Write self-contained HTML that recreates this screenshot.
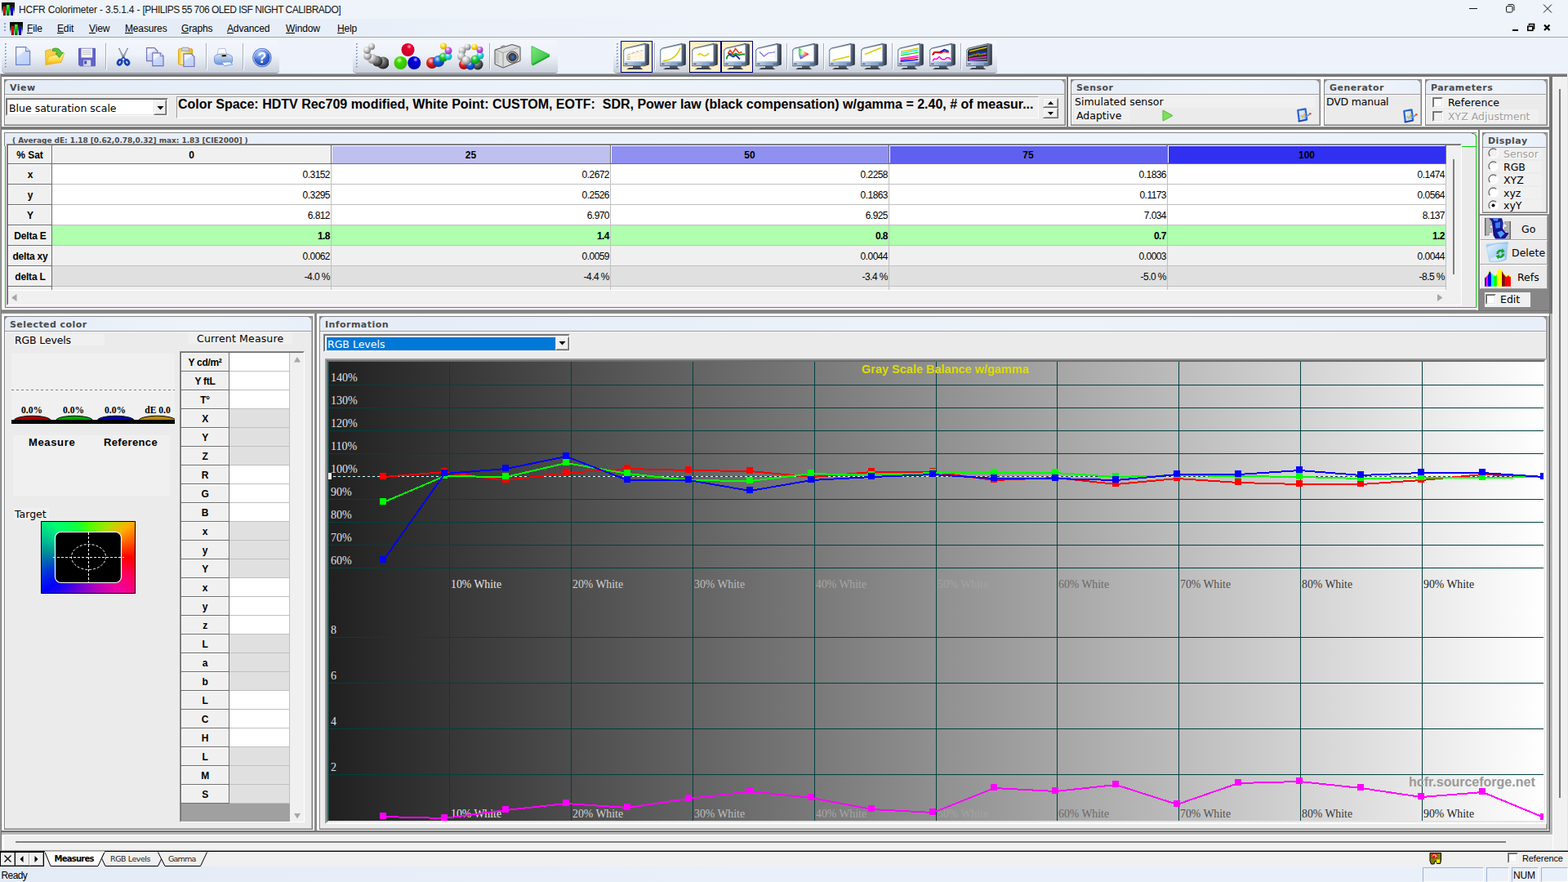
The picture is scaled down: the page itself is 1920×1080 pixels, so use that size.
<!DOCTYPE html>
<html lang="en"><head><meta charset="utf-8"><title>HCFR Colorimeter</title>
<style>
html,body{margin:0;padding:0;width:1920px;height:1080px;overflow:hidden;background:#f0f0f0}
#app{position:relative;width:1920px;height:1080px;overflow:hidden;font-family:"Liberation Sans",sans-serif}
#app div,#app span,#app svg{position:absolute;display:block;box-sizing:content-box}
#app span{white-space:nowrap}
#app span u{text-decoration:underline;text-underline-offset:1px}
#app span sup{position:static;display:inline}
</style></head><body><div id="app">
<div style="left:0px;top:0px;width:1920px;height:1080px;background:#f0f0f0"></div>
<div style="left:0px;top:0px;width:1920px;height:23px;background:#eef4fa"></div>
<div style="left:0px;top:23px;width:1920px;height:23px;background:linear-gradient(90deg,#e3ebf6 0,#e6edf7 300px,#edf2fa 650px,#eef4fa 900px)"></div>
<div style="left:0px;top:45px;width:1920px;height:1px;background:#a3a5a9"></div>
<div style="left:0px;top:46px;width:1920px;height:1px;background:#f8fafd"></div>
<div style="left:0px;top:46px;width:1920px;height:44px;background:#eef3fb"></div>
<svg width="0" height="0" style="left:0;top:0"><defs><linearGradient id="ig" x1="0" y1="0" x2="0" y2="1"><stop offset="0" stop-color="#000"/><stop offset="0.3" stop-color="#181818"/><stop offset="0.55" stop-color="#303030" stop-opacity="0.85"/><stop offset="1" stop-color="#fff" stop-opacity="0"/></linearGradient><linearGradient id="igr" x1="0" y1="0" x2="0" y2="1"><stop offset="0" stop-color="#ff0808"/><stop offset="0.4" stop-color="#f00000"/><stop offset="1" stop-color="#6c0000"/></linearGradient><linearGradient id="igg" x1="0" y1="0" x2="0" y2="1"><stop offset="0" stop-color="#50ff50"/><stop offset="0.4" stop-color="#00d800"/><stop offset="1" stop-color="#005800"/></linearGradient><linearGradient id="igb" x1="0" y1="0" x2="0" y2="1"><stop offset="0" stop-color="#0808ff"/><stop offset="0.4" stop-color="#0000f0"/><stop offset="1" stop-color="#00006c"/></linearGradient></defs></svg>
<svg style="left:2px;top:3px" width="16" height="16" viewBox="0 0 16 16"><rect x="0" y="0" width="16" height="16" fill="url(#ig)"/><rect x="2" y="5" width="3" height="11" fill="url(#igr)"/><rect x="6" y="3" width="3.600" height="13" fill="url(#igg)"/><rect x="11" y="6" width="3" height="10" fill="url(#igb)"/></svg>
<span style="left:23px;top:4px;font:12px 'Liberation Sans',sans-serif;letter-spacing:-0.18px;color:#151515;height:16px;line-height:16px;">HCFR Colorimeter - 3.5.1.4 - <em style="font-style:normal;letter-spacing:-0.52px">[PHILIPS 55 706 OLED ISF NIGHT CALIBRADO]</em></span>
<svg style="left:1790px;top:0" width="130" height="22" viewBox="0 0 130 22"><path d="M9 10.5h10" stroke="#111" stroke-width="1" fill="none"/><rect x="54.5" y="7.5" width="7.5" height="7.5" rx="1.5" stroke="#111" fill="none"/><path d="M56.5 5.5h5.5a2 2 0 0 1 2 2v5.5" stroke="#111" fill="none"/><path d="M100 5.5l10 10M110 5.5l-10 10" stroke="#111" stroke-width="1" fill="none"/></svg>
<svg style="left:1845px;top:26px" width="60" height="16" viewBox="0 0 60 16"><rect x="7" y="10" width="7" height="2" fill="#000"/><path d="M27.5 5v-1.5h6v5.5h-1.5" stroke="#000" stroke-width="1.6" fill="none"/><rect x="25.8" y="6.3" width="6" height="5" stroke="#000" stroke-width="1.6" fill="none"/><path d="M46 4.5l6.5 6.5M52.5 4.5l-6.5 6.5" stroke="#000" stroke-width="2.2" fill="none"/></svg>
<div style="left:6px;top:29px;width:1px;height:1px;background:#fff"></div>
<div style="left:5px;top:28px;width:2px;height:2px;background:#8ea4cc"></div>
<div style="left:6px;top:33px;width:1px;height:1px;background:#fff"></div>
<div style="left:5px;top:32px;width:2px;height:2px;background:#8ea4cc"></div>
<div style="left:6px;top:37px;width:1px;height:1px;background:#fff"></div>
<div style="left:5px;top:36px;width:2px;height:2px;background:#8ea4cc"></div>
<svg style="left:12px;top:27px" width="16" height="16" viewBox="0 0 16 16"><rect x="0" y="0" width="16" height="16" fill="url(#ig)"/><rect x="2" y="5" width="3" height="11" fill="url(#igr)"/><rect x="6" y="3" width="3.600" height="13" fill="url(#igg)"/><rect x="11" y="6" width="3" height="10" fill="url(#igb)"/></svg>
<span style="left:33px;top:27px;font:12px 'Liberation Sans',sans-serif;letter-spacing:-0.15px;color:#000;height:16px;line-height:16px;">File</span>
<div style="left:33px;top:40px;width:7px;height:1px;background:#000"></div>
<span style="left:70px;top:27px;font:12px 'Liberation Sans',sans-serif;letter-spacing:-0.15px;color:#000;height:16px;line-height:16px;">Edit</span>
<div style="left:70px;top:40px;width:8px;height:1px;background:#000"></div>
<span style="left:109px;top:27px;font:12px 'Liberation Sans',sans-serif;letter-spacing:-0.15px;color:#000;height:16px;line-height:16px;">View</span>
<div style="left:109px;top:40px;width:8px;height:1px;background:#000"></div>
<span style="left:153px;top:27px;font:12px 'Liberation Sans',sans-serif;letter-spacing:-0.15px;color:#000;height:16px;line-height:16px;">Measures</span>
<div style="left:153px;top:40px;width:10px;height:1px;background:#000"></div>
<span style="left:222px;top:27px;font:12px 'Liberation Sans',sans-serif;letter-spacing:-0.15px;color:#000;height:16px;line-height:16px;">Graphs</span>
<div style="left:222px;top:40px;width:9px;height:1px;background:#000"></div>
<span style="left:278px;top:27px;font:12px 'Liberation Sans',sans-serif;letter-spacing:-0.15px;color:#000;height:16px;line-height:16px;">Advanced</span>
<div style="left:278px;top:40px;width:8px;height:1px;background:#000"></div>
<span style="left:350px;top:27px;font:12px 'Liberation Sans',sans-serif;letter-spacing:-0.15px;color:#000;height:16px;line-height:16px;">Window</span>
<div style="left:350px;top:40px;width:11px;height:1px;background:#000"></div>
<span style="left:413px;top:27px;font:12px 'Liberation Sans',sans-serif;letter-spacing:-0.15px;color:#000;height:16px;line-height:16px;">Help</span>
<div style="left:413px;top:40px;width:9px;height:1px;background:#000"></div>
<div style="left:2px;top:49px;width:340px;height:40px;background:linear-gradient(#f3f6fc 0%,#eef2f9 45%,#dde2ec 72%,#c9cfdb 100%);border-radius:4px 4px 4px 5px;box-shadow:0 1px 0 #8d929c"></div>
<div style="left:7px;top:54px;width:1px;height:1px;background:#fff"></div>
<div style="left:6px;top:53px;width:2px;height:2px;background:#86a0cc"></div>
<div style="left:7px;top:54px;width:1px;height:1px;background:#dfe7f5"></div>
<div style="left:7px;top:58px;width:1px;height:1px;background:#fff"></div>
<div style="left:6px;top:57px;width:2px;height:2px;background:#86a0cc"></div>
<div style="left:7px;top:58px;width:1px;height:1px;background:#dfe7f5"></div>
<div style="left:7px;top:62px;width:1px;height:1px;background:#fff"></div>
<div style="left:6px;top:61px;width:2px;height:2px;background:#86a0cc"></div>
<div style="left:7px;top:62px;width:1px;height:1px;background:#dfe7f5"></div>
<div style="left:7px;top:66px;width:1px;height:1px;background:#fff"></div>
<div style="left:6px;top:65px;width:2px;height:2px;background:#86a0cc"></div>
<div style="left:7px;top:66px;width:1px;height:1px;background:#dfe7f5"></div>
<div style="left:7px;top:70px;width:1px;height:1px;background:#fff"></div>
<div style="left:6px;top:69px;width:2px;height:2px;background:#86a0cc"></div>
<div style="left:7px;top:70px;width:1px;height:1px;background:#dfe7f5"></div>
<div style="left:7px;top:74px;width:1px;height:1px;background:#fff"></div>
<div style="left:6px;top:73px;width:2px;height:2px;background:#86a0cc"></div>
<div style="left:7px;top:74px;width:1px;height:1px;background:#dfe7f5"></div>
<div style="left:7px;top:78px;width:1px;height:1px;background:#fff"></div>
<div style="left:6px;top:77px;width:2px;height:2px;background:#86a0cc"></div>
<div style="left:7px;top:78px;width:1px;height:1px;background:#dfe7f5"></div>
<div style="left:7px;top:82px;width:1px;height:1px;background:#fff"></div>
<div style="left:6px;top:81px;width:2px;height:2px;background:#86a0cc"></div>
<div style="left:7px;top:82px;width:1px;height:1px;background:#dfe7f5"></div>
<div style="left:432px;top:49px;width:251px;height:40px;background:linear-gradient(#f3f6fc 0%,#eef2f9 45%,#dde2ec 72%,#c9cfdb 100%);border-radius:4px 4px 4px 5px;box-shadow:0 1px 0 #8d929c"></div>
<div style="left:437px;top:54px;width:1px;height:1px;background:#fff"></div>
<div style="left:436px;top:53px;width:2px;height:2px;background:#86a0cc"></div>
<div style="left:437px;top:54px;width:1px;height:1px;background:#dfe7f5"></div>
<div style="left:437px;top:58px;width:1px;height:1px;background:#fff"></div>
<div style="left:436px;top:57px;width:2px;height:2px;background:#86a0cc"></div>
<div style="left:437px;top:58px;width:1px;height:1px;background:#dfe7f5"></div>
<div style="left:437px;top:62px;width:1px;height:1px;background:#fff"></div>
<div style="left:436px;top:61px;width:2px;height:2px;background:#86a0cc"></div>
<div style="left:437px;top:62px;width:1px;height:1px;background:#dfe7f5"></div>
<div style="left:437px;top:66px;width:1px;height:1px;background:#fff"></div>
<div style="left:436px;top:65px;width:2px;height:2px;background:#86a0cc"></div>
<div style="left:437px;top:66px;width:1px;height:1px;background:#dfe7f5"></div>
<div style="left:437px;top:70px;width:1px;height:1px;background:#fff"></div>
<div style="left:436px;top:69px;width:2px;height:2px;background:#86a0cc"></div>
<div style="left:437px;top:70px;width:1px;height:1px;background:#dfe7f5"></div>
<div style="left:437px;top:74px;width:1px;height:1px;background:#fff"></div>
<div style="left:436px;top:73px;width:2px;height:2px;background:#86a0cc"></div>
<div style="left:437px;top:74px;width:1px;height:1px;background:#dfe7f5"></div>
<div style="left:437px;top:78px;width:1px;height:1px;background:#fff"></div>
<div style="left:436px;top:77px;width:2px;height:2px;background:#86a0cc"></div>
<div style="left:437px;top:78px;width:1px;height:1px;background:#dfe7f5"></div>
<div style="left:437px;top:82px;width:1px;height:1px;background:#fff"></div>
<div style="left:436px;top:81px;width:2px;height:2px;background:#86a0cc"></div>
<div style="left:437px;top:82px;width:1px;height:1px;background:#dfe7f5"></div>
<div style="left:751px;top:49px;width:470px;height:40px;background:linear-gradient(#f3f6fc 0%,#eef2f9 45%,#dde2ec 72%,#c9cfdb 100%);border-radius:4px 4px 4px 5px;box-shadow:0 1px 0 #8d929c"></div>
<div style="left:756px;top:54px;width:1px;height:1px;background:#fff"></div>
<div style="left:755px;top:53px;width:2px;height:2px;background:#86a0cc"></div>
<div style="left:756px;top:54px;width:1px;height:1px;background:#dfe7f5"></div>
<div style="left:756px;top:58px;width:1px;height:1px;background:#fff"></div>
<div style="left:755px;top:57px;width:2px;height:2px;background:#86a0cc"></div>
<div style="left:756px;top:58px;width:1px;height:1px;background:#dfe7f5"></div>
<div style="left:756px;top:62px;width:1px;height:1px;background:#fff"></div>
<div style="left:755px;top:61px;width:2px;height:2px;background:#86a0cc"></div>
<div style="left:756px;top:62px;width:1px;height:1px;background:#dfe7f5"></div>
<div style="left:756px;top:66px;width:1px;height:1px;background:#fff"></div>
<div style="left:755px;top:65px;width:2px;height:2px;background:#86a0cc"></div>
<div style="left:756px;top:66px;width:1px;height:1px;background:#dfe7f5"></div>
<div style="left:756px;top:70px;width:1px;height:1px;background:#fff"></div>
<div style="left:755px;top:69px;width:2px;height:2px;background:#86a0cc"></div>
<div style="left:756px;top:70px;width:1px;height:1px;background:#dfe7f5"></div>
<div style="left:756px;top:74px;width:1px;height:1px;background:#fff"></div>
<div style="left:755px;top:73px;width:2px;height:2px;background:#86a0cc"></div>
<div style="left:756px;top:74px;width:1px;height:1px;background:#dfe7f5"></div>
<div style="left:756px;top:78px;width:1px;height:1px;background:#fff"></div>
<div style="left:755px;top:77px;width:2px;height:2px;background:#86a0cc"></div>
<div style="left:756px;top:78px;width:1px;height:1px;background:#dfe7f5"></div>
<div style="left:756px;top:82px;width:1px;height:1px;background:#fff"></div>
<div style="left:755px;top:81px;width:2px;height:2px;background:#86a0cc"></div>
<div style="left:756px;top:82px;width:1px;height:1px;background:#dfe7f5"></div>
<div style="left:129px;top:53px;width:1px;height:32px;background:#a8afbd"></div>
<div style="left:130px;top:54px;width:1px;height:32px;background:#fff"></div>
<div style="left:252px;top:53px;width:1px;height:32px;background:#a8afbd"></div>
<div style="left:253px;top:54px;width:1px;height:32px;background:#fff"></div>
<div style="left:297px;top:53px;width:1px;height:32px;background:#a8afbd"></div>
<div style="left:298px;top:54px;width:1px;height:32px;background:#fff"></div>
<div style="left:599px;top:53px;width:1px;height:32px;background:#a8afbd"></div>
<div style="left:600px;top:54px;width:1px;height:32px;background:#fff"></div>
<div style="left:801px;top:53px;width:1px;height:32px;background:#a8afbd"></div>
<div style="left:802px;top:54px;width:1px;height:32px;background:#fff"></div>
<div style="left:963px;top:53px;width:1px;height:32px;background:#a8afbd"></div>
<div style="left:964px;top:54px;width:1px;height:32px;background:#fff"></div>
<div style="left:1008px;top:53px;width:1px;height:32px;background:#a8afbd"></div>
<div style="left:1009px;top:54px;width:1px;height:32px;background:#fff"></div>
<div style="left:1092px;top:53px;width:1px;height:32px;background:#a8afbd"></div>
<div style="left:1093px;top:54px;width:1px;height:32px;background:#fff"></div>
<div style="left:1176px;top:53px;width:1px;height:32px;background:#a8afbd"></div>
<div style="left:1177px;top:54px;width:1px;height:32px;background:#fff"></div>
<svg width="0" height="0" style="left:0;top:0"><defs>
<linearGradient id="pg" x1="0" y1="0" x2="1" y2="1"><stop offset="0" stop-color="#f4f6ff"/><stop offset="1" stop-color="#c3cdf4"/></linearGradient>
<linearGradient id="fg" x1="0" y1="0" x2="0" y2="1"><stop offset="0" stop-color="#fdf3a8"/><stop offset="1" stop-color="#f0b818"/></linearGradient>
<linearGradient id="mg" x1="0" y1="0.7" x2="1" y2="1"><stop offset="0" stop-color="#d0dcee"/><stop offset="0.5" stop-color="#9cb4d4"/><stop offset="1" stop-color="#6c8cb8"/></linearGradient><linearGradient id="ms" x1="0" y1="0" x2="1" y2="0.300"><stop offset="0" stop-color="#7c8ca4"/><stop offset="0.5" stop-color="#4a5668"/><stop offset="1" stop-color="#2a323e"/></linearGradient>
<linearGradient id="mb" x1="0" y1="0" x2="0" y2="1"><stop offset="0" stop-color="#e8eef6"/><stop offset="1" stop-color="#9db0c8"/></linearGradient>
<radialGradient id="bgray" cx="0.35" cy="0.3" r="0.7"><stop offset="0" stop-color="#fff"/><stop offset="0.5" stop-color="#c8c8c8"/><stop offset="1" stop-color="#777"/></radialGradient>
<radialGradient id="bdark" cx="0.35" cy="0.3" r="0.7"><stop offset="0" stop-color="#ccc"/><stop offset="0.5" stop-color="#666"/><stop offset="1" stop-color="#222"/></radialGradient>
<radialGradient id="bred" cx="0.6" cy="0.25" r="0.75"><stop offset="0" stop-color="#ffb0c0"/><stop offset="0.25" stop-color="#e80030"/><stop offset="1" stop-color="#c00028"/></radialGradient>
<radialGradient id="bgreen" cx="0.4" cy="0.3" r="0.75"><stop offset="0" stop-color="#d0ffb0"/><stop offset="0.3" stop-color="#40d800"/><stop offset="1" stop-color="#30b800"/></radialGradient>
<radialGradient id="bblue" cx="0.6" cy="0.25" r="0.75"><stop offset="0" stop-color="#b0b0ff"/><stop offset="0.25" stop-color="#0000e0"/><stop offset="1" stop-color="#0000b0"/></radialGradient>
<radialGradient id="byel" cx="0.4" cy="0.3" r="0.75"><stop offset="0" stop-color="#fffff0"/><stop offset="0.4" stop-color="#ffe020"/><stop offset="1" stop-color="#c8a000"/></radialGradient>
<radialGradient id="bmag" cx="0.4" cy="0.3" r="0.75"><stop offset="0" stop-color="#fff0ff"/><stop offset="0.4" stop-color="#d060e0"/><stop offset="1" stop-color="#9020b0"/></radialGradient>
<radialGradient id="bcy" cx="0.4" cy="0.3" r="0.75"><stop offset="0" stop-color="#f0ffff"/><stop offset="0.4" stop-color="#30d8e0"/><stop offset="1" stop-color="#0098a8"/></radialGradient>
<radialGradient id="bgr2" cx="0.4" cy="0.3" r="0.75"><stop offset="0" stop-color="#e0ffe0"/><stop offset="0.4" stop-color="#20c830"/><stop offset="1" stop-color="#008818"/></radialGradient>
<radialGradient id="brd2" cx="0.4" cy="0.3" r="0.75"><stop offset="0" stop-color="#ffd0d0"/><stop offset="0.4" stop-color="#e02020"/><stop offset="1" stop-color="#900000"/></radialGradient>
<radialGradient id="bbl2" cx="0.4" cy="0.3" r="0.75"><stop offset="0" stop-color="#d0e8ff"/><stop offset="0.4" stop-color="#1060e0"/><stop offset="1" stop-color="#003090"/></radialGradient>
<radialGradient id="hq" cx="0.4" cy="0.3" r="0.8"><stop offset="0" stop-color="#a8c4f8"/><stop offset="0.5" stop-color="#3868d0"/><stop offset="1" stop-color="#1838a0"/></radialGradient>
<linearGradient id="play" x1="0" y1="0" x2="1" y2="1"><stop offset="0" stop-color="#80e880"/><stop offset="1" stop-color="#28b838"/></linearGradient>

</defs></svg>
<svg style="left:0;top:46px" width="345" height="44" viewBox="0 46 345 44"><defs><linearGradient id="pg2" x1="0" y1="0" x2="0.6" y2="1"><stop offset="0" stop-color="#fbfcff"/><stop offset="0.42" stop-color="#eef2ff"/><stop offset="0.46" stop-color="#cfdcfb"/><stop offset="1" stop-color="#bcd0fa"/></linearGradient><linearGradient id="fg2" x1="0" y1="0" x2="0" y2="1"><stop offset="0" stop-color="#fff6b0"/><stop offset="0.6" stop-color="#fbd848"/><stop offset="1" stop-color="#f0b000"/></linearGradient><linearGradient id="cb2" x1="0" y1="0" x2="1" y2="0"><stop offset="0" stop-color="#f0c020"/><stop offset="0.3" stop-color="#fff4b0"/><stop offset="1" stop-color="#e8b010"/></linearGradient><linearGradient id="pr2" x1="0" y1="0" x2="0" y2="1"><stop offset="0" stop-color="#dce8fc"/><stop offset="1" stop-color="#6c98dc"/></linearGradient></defs><path d="M19.6 57.6h12l5 5v16.8h-17z" fill="url(#pg2)" stroke="#6c84c4" stroke-width="1.2"/><path d="M31.6 57.6v5h5" fill="#e4ecff" stroke="#6c84c4" stroke-width="1.1"/><path d="M55.500 62.200l6.700-2 2.800 2h7.500v6l-16.500 11z" fill="#f6d048" stroke="#dca418" stroke-width="0.700"/><path d="M56 79.400l3.400-10 5-1.400 4.300-1.100 10-1.900-3.700 11.200z" fill="url(#fg2)" stroke="#e4ac1c" stroke-width="0.800"/><path d="M64.500 59.800c4.500-1.800 9-0.300 10.800 4.600l2-0.300-4.600 6.500-4.700-5 2.400-0.500c-1.300-2.600-3.300-3.300-5.900-2.600z" fill="#5cc43c" stroke="#2f8f22" stroke-width="0.800"/><path d="M96.500 59.300h20v21.500h-18.500l-1.500-1.500z" fill="#6264c8" stroke="#4a4cb0" stroke-width="0.800"/><rect x="99.500" y="59.500" width="13.700" height="11" fill="#f6f6f8"/><path d="M101 62.200h10.500M101 64.400h10.500M101 66.600h10.500" stroke="#b4b4c0" stroke-width="0.800"/><rect x="102.200" y="73.500" width="9" height="7.300" fill="#dcdce4"/><rect x="103.200" y="74.500" width="3" height="4" fill="#4a50b8"/><path d="M145 59l1.200 0 5.800 11-1.600 1.600z" fill="#56667e"/><path d="M157 59l-1.200 0-5.800 11 1.600 1.600z" fill="#56667e"/><path d="M146 60.500l4.500 9M156 60.500l-4.500 9" stroke="#eef2f8" stroke-width="0.600"/><ellipse cx="146.700" cy="76.300" rx="2.300" ry="3.100" fill="none" stroke="#1440b0" stroke-width="2.700" transform="rotate(28 146.700 76.300)"/><ellipse cx="155.400" cy="76.300" rx="2.300" ry="3.100" fill="none" stroke="#1440b0" stroke-width="2.700" transform="rotate(-28 155.400 76.300)"/><path d="M148.500 72.500l2.600-2.500 2.600 2.500" stroke="#1440b0" stroke-width="1.600" fill="none"/><path d="M179.600 58.600h9.500l3.700 3.700v12.300h-13.200z" fill="url(#pg2)" stroke="#7472b4" stroke-width="1.200"/><path d="M186.800 64.900h9.500l3.700 3.700v12h-13.200z" fill="url(#pg2)" stroke="#7472b4" stroke-width="1.200"/><path d="M196.300 64.900v3.700h3.700" fill="#e4ecff" stroke="#7472b4" stroke-width="1"/><rect x="218.500" y="59.400" width="17.300" height="20" rx="2.200" fill="url(#cb2)" stroke="#d8a018" stroke-width="0.900"/><path d="M222 62.300l1.200-4h7.600l1.200 4z" fill="#d4d8e0" stroke="#8890a0" stroke-width="0.800"/><path d="M224.900 65.800h9.300l3.700 3.700v12h-13z" fill="url(#pg2)" stroke="#7472b4" stroke-width="1.200"/><path d="M266.300 67l1-7.300 8.500-0.400 1.700 7.300z" fill="#fcfcff" stroke="#a0b4dc" stroke-width="0.800"/><path d="M262.500 70.500c0-3 4-4.500 10.500-4.500s11.500 1.500 11.500 4.500v4.500c0 2.500-4 4-7 4h-9.500c-3 0-5.500-1.500-5.500-4z" fill="url(#pr2)" stroke="#6488cc" stroke-width="0.800"/><path d="M270.300 66l7.300-0.300 1 5.500-7.700 0.600z" fill="#d4d6da" stroke="#a8acb4" stroke-width="0.500"/><path d="M271.500 67.200l5.200-0.200 0.400 2.200-5.300 0.300z" fill="#1c1c20"/><path d="M271.300 76.300l10-0.600 3.500 3.100-10 1.900z" fill="#f0f6ff" stroke="#4c90e8" stroke-width="0.800"/><circle cx="320.900" cy="70.600" r="11.300" fill="url(#hq)" stroke="#4a6cb8" stroke-width="0.800"/><circle cx="320.900" cy="70.600" r="10.300" fill="none" stroke="#dce6fa" stroke-width="0.900"/><path d="M312 67a9.500 9.500 0 0 1 17.500-1c-6 0-12 2-17.500 6z" fill="#fff" opacity="0.180"/><text x="320.900" y="76.800" text-anchor="middle" font-family="Liberation Sans,sans-serif" font-weight="bold" font-size="17.500" fill="#fff">?</text></svg>
<svg style="left:444px;top:53px" width="32" height="33" viewBox="0 0 32 33"><circle cx="25" cy="24" r="7.500" fill="url(#bdark)"/><circle cx="18" cy="22" r="6.500" fill="url(#bdark)"/><circle cx="12" cy="19" r="6" fill="url(#bgray)"/><circle cx="6" cy="15.500" r="5" fill="url(#bgray)"/><circle cx="5.500" cy="8.500" r="4.500" fill="url(#bgray)"/><circle cx="11" cy="4" r="4" fill="url(#bgray)"/></svg>
<svg style="left:482px;top:52px" width="34" height="34" viewBox="0 0 34 34"><circle cx="17.500" cy="9" r="8" fill="url(#bred)"/><circle cx="8.500" cy="25" r="8" fill="url(#bgreen)"/><circle cx="25.200" cy="25" r="8" fill="url(#bblue)"/></svg>
<svg style="left:521px;top:52px" width="34" height="34" viewBox="0 0 34 34"><circle cx="8" cy="25" r="7" fill="url(#brd2)"/><circle cx="16" cy="23" r="7" fill="url(#bbl2)"/><circle cx="22" cy="18" r="5.500" fill="url(#bgr2)"/><circle cx="28" cy="17" r="4.500" fill="url(#bcy)"/><circle cx="28" cy="10" r="4.500" fill="url(#bmag)"/><circle cx="22" cy="4.500" r="4" fill="url(#byel)"/></svg>
<svg style="left:560px;top:54px" width="34" height="34" viewBox="0 0 34 34"><circle cx="25" cy="25" r="6.500" fill="url(#bdark)"/><circle cx="8" cy="25" r="6" fill="url(#brd2)"/><circle cx="16" cy="26" r="5.500" fill="url(#bbl2)"/><circle cx="22" cy="19" r="5.500" fill="url(#bgr2)"/><circle cx="28" cy="14" r="4.500" fill="url(#bcy)"/><circle cx="27.500" cy="7" r="4" fill="url(#bmag)"/><circle cx="21" cy="3.500" r="3.800" fill="url(#byel)"/><circle cx="12.500" cy="3.500" r="4" fill="url(#bgray)"/><circle cx="6" cy="8" r="4.500" fill="url(#bgray)"/><circle cx="5" cy="15" r="5" fill="url(#bgray)"/><circle cx="11" cy="20" r="5.500" fill="url(#bgray)"/></svg>
<svg style="left:605px;top:53px" width="34" height="32" viewBox="0 0 34 32"><path d="M1 8l21-6.500 10 3v17l-21 8.500-10-4.500z" fill="#dcdcdc" stroke="#4c4c4c" stroke-width="1"/><path d="M1 8l10 3.500v18.500" fill="none" stroke="#888" stroke-width="0.800"/><path d="M11 11.500l21-7" stroke="#999" stroke-width="0.800" fill="none"/><path d="M3 11v13M5 12v13" stroke="#aaa" stroke-width="0.800"/><circle cx="22.500" cy="17" r="7" fill="#a0a0a0" stroke="#505050"/><circle cx="22.500" cy="17" r="4.500" fill="#404858" stroke="#222"/><circle cx="22.500" cy="17" r="2" fill="#2868d0"/><rect x="8" y="3.500" width="5" height="2" fill="#999" transform="rotate(-17 8 3.500)"/></svg>
<svg style="left:649px;top:55px" width="26" height="27" viewBox="0 0 26 27"><path d="M2 1.500l22 10.500-20.500 12.500-1.500-1z" fill="url(#play)" stroke="#30b840" stroke-width="0.800"/><path d="M2 23.500l22-11.500v2.500l-20.500 11z" fill="#28a838"/></svg>
<div style="left:760px;top:50px;width:39px;height:39px;background:#ffefc8;border:1px solid #000080;box-sizing:border-box"></div>
<div style="left:844px;top:50px;width:39px;height:39px;background:#ffefc8;border:1px solid #000080;box-sizing:border-box"></div>
<div style="left:883px;top:50px;width:39px;height:39px;background:#ffefc8;border:1px solid #000080;box-sizing:border-box"></div>
<svg style="left:763px;top:53px" width="32" height="33" viewBox="0 0 32 33"><g> <path d="M4 32l3.200-2h14.300l3 2z" fill="#3c424a"/><rect x="12" y="28" width="9.500" height="2.200" fill="#4c535c"/> <path d="M27 0.300l3.800 0.500q1 0.200 1 1.200v23.500q0 1-1 1.300l-3.800 1z" fill="url(#ms)"/> <path d="M2.600 6.200L27 0.400v27.300H1q-0.900 0-0.900-0.900V10.500q0-1.200 0.700-2.300z" fill="url(#mg)" stroke="#465260" stroke-width="0.900"/> <path d="M3.100 7.400L26.500 1.900v20.200H1.900V10.300z" fill="#fff"/> <path d="M1 22.100h25.800" stroke="#e8eef6" stroke-width="0.500"/> <rect x="1.800" y="24.700" width="3.800" height="1.300" fill="#4c5a70"/><rect x="22" y="24.800" width="4.400" height="1.300" fill="#4c5a70"/><rect x="13" y="25" width="1.400" height="1.200" fill="#8ca0bc"/></g><g fill="#fde3b0"><path d="M3.500 12.500l21-5v13.500h-21z" opacity="0.550"/></g><g stroke="#fff" stroke-width="1.600" fill="none"><path d="M10 15.500l4.500-1M16 14l4-0.800M21.500 11.500l3-0.500M10 18.500h4.500M16 17.500h4M21.500 16.500h3M10 21h4.500M16 20.500h4M21.500 20h3"/></g><g stroke="#b4b8cc" stroke-width="1.200" fill="none"><path d="M5.500 14.500l3-1.500M10.500 12.500l3.500-1.200M16 10.500l3-0.800M21.500 9.200l2-0.600M5 17.500l3.500-1.300M5 19.700l3.500-0.500"/></g></svg>
<svg style="left:808px;top:53px" width="32" height="33" viewBox="0 0 32 33"><g> <path d="M4 32l3.200-2h14.300l3 2z" fill="#3c424a"/><rect x="12" y="28" width="9.500" height="2.200" fill="#4c535c"/> <path d="M27 0.300l3.800 0.500q1 0.200 1 1.200v23.500q0 1-1 1.300l-3.800 1z" fill="url(#ms)"/> <path d="M2.600 6.200L27 0.400v27.300H1q-0.900 0-0.900-0.900V10.500q0-1.200 0.700-2.300z" fill="url(#mg)" stroke="#465260" stroke-width="0.900"/> <path d="M3.100 7.400L26.500 1.900v20.200H1.900V10.300z" fill="#fff"/> <path d="M1 22.100h25.800" stroke="#e8eef6" stroke-width="0.500"/> <rect x="1.800" y="24.700" width="3.800" height="1.300" fill="#4c5a70"/><rect x="22" y="24.800" width="4.400" height="1.300" fill="#4c5a70"/><rect x="13" y="25" width="1.400" height="1.200" fill="#8ca0bc"/></g><path d="M4 21.500c9-0.500 17-5 21-16" stroke="#d4cc00" stroke-width="1.500" fill="none"/></svg>
<svg style="left:847px;top:53px" width="32" height="33" viewBox="0 0 32 33"><g> <path d="M4 32l3.200-2h14.300l3 2z" fill="#3c424a"/><rect x="12" y="28" width="9.500" height="2.200" fill="#4c535c"/> <path d="M27 0.300l3.800 0.500q1 0.200 1 1.200v23.500q0 1-1 1.300l-3.800 1z" fill="url(#ms)"/> <path d="M2.600 6.200L27 0.400v27.300H1q-0.900 0-0.900-0.900V10.500q0-1.200 0.700-2.300z" fill="url(#mg)" stroke="#465260" stroke-width="0.900"/> <path d="M3.100 7.400L26.500 1.900v20.200H1.900V10.300z" fill="#fff"/> <path d="M1 22.100h25.800" stroke="#e8eef6" stroke-width="0.500"/> <rect x="1.800" y="24.700" width="3.800" height="1.300" fill="#4c5a70"/><rect x="22" y="24.800" width="4.400" height="1.300" fill="#4c5a70"/><rect x="13" y="25" width="1.400" height="1.200" fill="#8ca0bc"/></g><path d="M7.500 14.500l2.200-1.700 2 0.300 2.600 2 2.400 0.300 2.200-1.200 2.600-2" stroke="#d4cc00" stroke-width="1.500" fill="none"/></svg>
<svg style="left:886px;top:53px" width="32" height="33" viewBox="0 0 32 33"><g> <path d="M4 32l3.200-2h14.300l3 2z" fill="#3c424a"/><rect x="12" y="28" width="9.500" height="2.200" fill="#4c535c"/> <path d="M27 0.300l3.800 0.500q1 0.200 1 1.200v23.500q0 1-1 1.300l-3.800 1z" fill="url(#ms)"/> <path d="M2.600 6.200L27 0.400v27.300H1q-0.900 0-0.900-0.900V10.500q0-1.200 0.700-2.300z" fill="url(#mg)" stroke="#465260" stroke-width="0.900"/> <path d="M3.100 7.400L26.500 1.900v20.200H1.900V10.300z" fill="#fff"/> <path d="M1 22.100h25.800" stroke="#e8eef6" stroke-width="0.500"/> <rect x="1.800" y="24.700" width="3.800" height="1.300" fill="#4c5a70"/><rect x="22" y="24.800" width="4.400" height="1.300" fill="#4c5a70"/><rect x="13" y="25" width="1.400" height="1.200" fill="#8ca0bc"/></g><path d="M3.500 19.500l1.300-4 4-2.500 3.200 1 3-1.500 4 2 4-1h3" stroke="#109020" stroke-width="1.800" fill="none"/><path d="M5.500 11.500l3.500 3.500 3 1.500 3-2 5 5" stroke="#1030a0" stroke-width="1.800" fill="none"/><path d="M5.500 12.500l2.500-4 3 4 3.500-6 4.500 5.500 3.500-1.500" stroke="#e05020" stroke-width="1.800" fill="none"/></svg>
<svg style="left:925px;top:53px" width="32" height="33" viewBox="0 0 32 33"><g> <path d="M4 32l3.200-2h14.300l3 2z" fill="#3c424a"/><rect x="12" y="28" width="9.500" height="2.200" fill="#4c535c"/> <path d="M27 0.300l3.800 0.500q1 0.200 1 1.200v23.500q0 1-1 1.300l-3.800 1z" fill="url(#ms)"/> <path d="M2.600 6.200L27 0.400v27.300H1q-0.900 0-0.900-0.900V10.500q0-1.200 0.700-2.300z" fill="url(#mg)" stroke="#465260" stroke-width="0.900"/> <path d="M3.100 7.400L26.500 1.900v20.200H1.900V10.300z" fill="#fff"/> <path d="M1 22.100h25.800" stroke="#e8eef6" stroke-width="0.500"/> <rect x="1.800" y="24.700" width="3.800" height="1.300" fill="#4c5a70"/><rect x="22" y="24.800" width="4.400" height="1.300" fill="#4c5a70"/><rect x="13" y="25" width="1.400" height="1.200" fill="#8ca0bc"/></g><path d="M4 19h21M4 16.500h21M4 14h21" stroke="#ececec" stroke-width="0.500"/><path d="M24.500 6v14" stroke="#c8e8b8" stroke-width="0.600"/><path d="M5 10.500l5.500 5.500 5-4 5.500-0.800 3-0.700" stroke="#7468e0" stroke-width="1.100" fill="none"/></svg>
<svg style="left:970px;top:53px" width="32" height="33" viewBox="0 0 32 33"><g> <path d="M4 32l3.200-2h14.300l3 2z" fill="#3c424a"/><rect x="12" y="28" width="9.500" height="2.200" fill="#4c535c"/> <path d="M27 0.300l3.800 0.500q1 0.200 1 1.200v23.500q0 1-1 1.300l-3.800 1z" fill="url(#ms)"/> <path d="M2.600 6.200L27 0.400v27.300H1q-0.900 0-0.900-0.900V10.500q0-1.200 0.700-2.300z" fill="url(#mg)" stroke="#465260" stroke-width="0.900"/> <path d="M3.100 7.400L26.500 1.900v20.200H1.900V10.300z" fill="#fff"/> <path d="M1 22.100h25.800" stroke="#e8eef6" stroke-width="0.500"/> <rect x="1.800" y="24.700" width="3.800" height="1.300" fill="#4c5a70"/><rect x="22" y="24.800" width="4.400" height="1.300" fill="#4c5a70"/><rect x="13" y="25" width="1.400" height="1.200" fill="#8ca0bc"/></g><defs><linearGradient id="cie" x1="0" y1="0" x2="1" y2="0.400"><stop offset="0" stop-color="#00d030"/><stop offset="0.500" stop-color="#f0ffd0"/><stop offset="1" stop-color="#ff1010"/></linearGradient><linearGradient id="cie2" x1="0.300" y1="0" x2="0" y2="1"><stop offset="0.450" stop-color="#1020ff" stop-opacity="0"/><stop offset="1" stop-color="#1020ff"/></linearGradient></defs><path d="M8.500 5.500c-1.500 4-0.500 11 2 14l10-6c-4-3-8-6-12-8z" fill="url(#cie)"/><path d="M8.500 5.500c-1.500 4-0.500 11 2 14l10-6c-4-3-8-6-12-8z" fill="url(#cie2)"/></svg>
<svg style="left:1015px;top:53px" width="32" height="33" viewBox="0 0 32 33"><g> <path d="M4 32l3.200-2h14.300l3 2z" fill="#3c424a"/><rect x="12" y="28" width="9.500" height="2.200" fill="#4c535c"/> <path d="M27 0.300l3.800 0.500q1 0.200 1 1.200v23.500q0 1-1 1.300l-3.800 1z" fill="url(#ms)"/> <path d="M2.600 6.200L27 0.400v27.300H1q-0.900 0-0.900-0.900V10.500q0-1.200 0.700-2.300z" fill="url(#mg)" stroke="#465260" stroke-width="0.900"/> <path d="M3.100 7.400L26.500 1.900v20.200H1.900V10.300z" fill="#fff"/> <path d="M1 22.100h25.800" stroke="#e8eef6" stroke-width="0.500"/> <rect x="1.800" y="24.700" width="3.800" height="1.300" fill="#4c5a70"/><rect x="22" y="24.800" width="4.400" height="1.300" fill="#4c5a70"/><rect x="13" y="25" width="1.400" height="1.200" fill="#8ca0bc"/></g><path d="M4.500 21l20.500-5" stroke="#d4cc00" stroke-width="1.500" fill="none"/></svg>
<svg style="left:1054px;top:53px" width="32" height="33" viewBox="0 0 32 33"><g> <path d="M4 32l3.200-2h14.300l3 2z" fill="#3c424a"/><rect x="12" y="28" width="9.500" height="2.200" fill="#4c535c"/> <path d="M27 0.300l3.800 0.500q1 0.200 1 1.200v23.500q0 1-1 1.300l-3.800 1z" fill="url(#ms)"/> <path d="M2.600 6.200L27 0.400v27.300H1q-0.900 0-0.900-0.900V10.500q0-1.200 0.700-2.300z" fill="url(#mg)" stroke="#465260" stroke-width="0.900"/> <path d="M3.100 7.400L26.500 1.900v20.200H1.900V10.300z" fill="#fff"/> <path d="M1 22.100h25.800" stroke="#e8eef6" stroke-width="0.500"/> <rect x="1.800" y="24.700" width="3.800" height="1.300" fill="#4c5a70"/><rect x="22" y="24.800" width="4.400" height="1.300" fill="#4c5a70"/><rect x="13" y="25" width="1.400" height="1.200" fill="#8ca0bc"/></g><path d="M5 13.500l20-8" stroke="#d4cc00" stroke-width="1.500" fill="none"/></svg>
<svg style="left:1099px;top:53px" width="32" height="33" viewBox="0 0 32 33"><g> <path d="M4 32l3.200-2h14.300l3 2z" fill="#3c424a"/><rect x="12" y="28" width="9.500" height="2.200" fill="#4c535c"/> <path d="M27 0.300l3.800 0.500q1 0.200 1 1.200v23.500q0 1-1 1.300l-3.800 1z" fill="url(#ms)"/> <path d="M2.600 6.200L27 0.400v27.300H1q-0.900 0-0.900-0.900V10.500q0-1.200 0.700-2.300z" fill="url(#mg)" stroke="#465260" stroke-width="0.900"/> <path d="M3.100 7.400L26.500 1.900v20.200H1.900V10.300z" fill="#fff"/> <path d="M1 22.100h25.800" stroke="#e8eef6" stroke-width="0.500"/> <rect x="1.800" y="24.700" width="3.800" height="1.300" fill="#4c5a70"/><rect x="22" y="24.800" width="4.400" height="1.300" fill="#4c5a70"/><rect x="13" y="25" width="1.400" height="1.200" fill="#8ca0bc"/></g><g stroke-width="1.300" fill="none"><path d="M4 10.500l21.500-4.500" stroke="#dcc800"/><path d="M4 12.700l21.500-4.500" stroke="#00f0f0"/><path d="M4 14.900l21.500-3.800" stroke="#00e000"/><path d="M3.500 18.500l22-3.200" stroke="#ff00e0"/><path d="M3.500 20.300l22-3" stroke="#ff0000"/><path d="M3.500 22l22-2" stroke="#0000ff"/></g></svg>
<svg style="left:1138px;top:53px" width="32" height="33" viewBox="0 0 32 33"><g> <path d="M4 32l3.200-2h14.300l3 2z" fill="#3c424a"/><rect x="12" y="28" width="9.500" height="2.200" fill="#4c535c"/> <path d="M27 0.300l3.800 0.500q1 0.200 1 1.200v23.500q0 1-1 1.300l-3.800 1z" fill="url(#ms)"/> <path d="M2.600 6.200L27 0.400v27.300H1q-0.900 0-0.900-0.900V10.500q0-1.200 0.700-2.300z" fill="url(#mg)" stroke="#465260" stroke-width="0.900"/> <path d="M3.100 7.400L26.500 1.900v20.200H1.900V10.300z" fill="#fff"/> <path d="M1 22.100h25.800" stroke="#e8eef6" stroke-width="0.500"/> <rect x="1.800" y="24.700" width="3.800" height="1.300" fill="#4c5a70"/><rect x="22" y="24.800" width="4.400" height="1.300" fill="#4c5a70"/><rect x="13" y="25" width="1.400" height="1.200" fill="#8ca0bc"/></g><g stroke-width="1.500" fill="none"><path d="M4.500 13.500l2-2.500 6 0.500 3-2 3 1 3.500-1" stroke="#00d000"/><path d="M4.500 14l2-3 6 0 3-1.500 3-1.800 3 1.200 2 0.600" stroke="#0000e8"/><path d="M3.500 14.500l2-3.500 5 0.500 4 0.500 3-2 3.500 0.800h3" stroke="#ff0000"/><path d="M4 21.500l2-2.500 3 0.500 3-3 3.500 3 3 0.500 3-2.500 3 0.500 1.500 2" stroke="#ff00e0"/></g></svg>
<svg style="left:1183px;top:53px" width="32" height="33" viewBox="0 0 32 33"><g> <path d="M4 32l3.200-2h14.300l3 2z" fill="#3c424a"/><rect x="12" y="28" width="9.500" height="2.200" fill="#4c535c"/> <path d="M27 0.300l3.800 0.500q1 0.200 1 1.200v23.500q0 1-1 1.300l-3.800 1z" fill="url(#ms)"/> <path d="M2.600 6.200L27 0.400v27.300H1q-0.900 0-0.900-0.900V10.500q0-1.200 0.700-2.300z" fill="url(#mg)" stroke="#465260" stroke-width="0.900"/> <path d="M3.100 7.400L26.500 1.900v20.200H1.900V10.300z" fill="#fff"/> <path d="M1 22.100h25.800" stroke="#e8eef6" stroke-width="0.500"/> <rect x="1.800" y="24.700" width="3.800" height="1.300" fill="#4c5a70"/><rect x="22" y="24.800" width="4.400" height="1.300" fill="#4c5a70"/><rect x="13" y="25" width="1.400" height="1.200" fill="#8ca0bc"/></g><path d="M3.100 7.400L26.500 1.900v20.200H1.900V10.300z" fill="#2e2e30"/><g stroke-width="1.300" fill="none"><path d="M4 9.800l21.500-5" stroke="#e8d800"/><path d="M3 15l3-1 2-1.500 3 0.500 3-1.500 3 1 3-1.500 3 0.500 2.500-1" stroke="#1030e0"/><path d="M3 16l3-0.500 3-1.500 3 0.500 3-2 3 1.500 3-1 4-0.500" stroke="#10c020"/><path d="M3 16.500l3-1.500 3 0.500 3-2.500 3 1.500 3-1.500 3 1 3-2.500" stroke="#f06020" stroke-dasharray="2 1.500"/><path d="M3 19l22.500-2.500" stroke="#ff20e0"/><path d="M3.500 21l22-1.500" stroke="#8070e0"/></g></svg>
<div style="left:0px;top:90px;width:1919px;height:1px;background:#a9adb4"></div>
<div style="left:0px;top:91px;width:1919px;height:3px;background:#767676"></div>
<div style="left:2px;top:94px;width:1895px;height:3px;background:#fff"></div>
<div style="left:0px;top:91px;width:1px;height:951px;background:#a0a0a0"></div>
<div style="left:1px;top:91px;width:1px;height:951px;background:#767676"></div>
<div style="left:2px;top:94px;width:3px;height:948px;background:#fff"></div>
<div style="left:1895px;top:94px;width:2px;height:924px;background:#fff"></div>
<div style="left:1897px;top:91px;width:4px;height:931px;background:#767676"></div>
<div style="left:1901px;top:94px;width:1px;height:946px;background:#fff"></div>
<div style="left:1895px;top:384px;width:1px;height:633px;background:#fff"></div>
<div style="left:1896px;top:384px;width:2px;height:635px;background:#707070"></div>
<div style="left:1898px;top:384px;width:3px;height:638px;background:#b8b8b8"></div>
<div style="left:1902px;top:94px;width:18px;height:948px;background:#f1f1f1"></div>
<div style="left:1919px;top:94px;width:1px;height:948px;background:#e6e6e6"></div>
<div style="left:1909px;top:109px;width:2px;height:868px;background:#7a7a7a"></div>
<div style="left:2px;top:154px;width:1895px;height:1px;background:#fff"></div>
<div style="left:2px;top:155px;width:1895px;height:1px;background:#8c8c8c"></div>
<div style="left:2px;top:156px;width:1895px;height:2px;background:#767676"></div>
<div style="left:2px;top:158px;width:1895px;height:1px;background:#8c8c8c"></div>
<div style="left:2px;top:159px;width:1895px;height:3px;background:#fff"></div>
<div style="left:2px;top:378px;width:1895px;height:1px;background:#f4f4f4"></div>
<div style="left:2px;top:379px;width:1895px;height:1px;background:#b4b4b4"></div>
<div style="left:2px;top:380px;width:1895px;height:1px;background:#707070"></div>
<div style="left:2px;top:381px;width:1895px;height:3px;background:#8a8a8a"></div>
<div style="left:2px;top:384px;width:1895px;height:3px;background:#fff"></div>
<div style="left:2px;top:1016px;width:1895px;height:1px;background:#fff"></div>
<div style="left:2px;top:1017px;width:1896px;height:2px;background:#707070"></div>
<div style="left:2px;top:1019px;width:1899px;height:3px;background:#b8b8b8"></div>
<div style="left:2px;top:1022px;width:1900px;height:1px;background:#fff"></div>
<div style="left:1305px;top:94px;width:1px;height:61px;background:#fff"></div>
<div style="left:1306px;top:94px;width:2px;height:61px;background:#767676"></div>
<div style="left:1308px;top:94px;width:3px;height:61px;background:#fff"></div>
<div style="left:1617px;top:94px;width:4px;height:61px;background:#fff"></div>
<div style="left:1741px;top:94px;width:4px;height:61px;background:#fff"></div>
<div style="left:1808px;top:159px;width:2px;height:221px;background:#fff"></div>
<div style="left:1810px;top:159px;width:2px;height:221px;background:#808080"></div>
<div style="left:1812px;top:159px;width:3px;height:103px;background:#fff"></div>
<div style="left:1812px;top:262px;width:85px;height:118px;background:#878787"></div>
<div style="left:1812px;top:261px;width:85px;height:1px;background:#fff"></div>
<div style="left:383px;top:384px;width:2px;height:633px;background:#fff"></div>
<div style="left:385px;top:383px;width:3px;height:634px;background:#8a8a8a"></div>
<div style="left:388px;top:384px;width:3px;height:633px;background:#fff"></div>
<div style="left:5px;top:97px;width:1300px;height:57px;background:#ebebeb"></div>
<div style="left:5px;top:97px;width:1300px;height:1px;background:#828282"></div>
<div style="left:5px;top:97px;width:1px;height:57px;background:#828282"></div>
<div style="left:1303px;top:98px;width:1px;height:55px;background:#b4b4b4"></div>
<div style="left:1304px;top:97px;width:1px;height:57px;background:#7c7c7c"></div>
<div style="left:6px;top:152px;width:1298px;height:1px;background:#b4b4b4"></div>
<div style="left:5px;top:153px;width:1300px;height:1px;background:#7c7c7c"></div>
<div style="left:6px;top:98px;width:5px;height:5px;background:#8a8a8a"></div>
<div style="left:1298px;top:98px;width:5px;height:5px;background:#8a8a8a"></div>
<div style="left:6px;top:98px;width:1297px;height:17px;background:linear-gradient(90deg,#e5ecf6,#eef3fa 60%,#e9eff8);border-radius:5px 5px 0 0"></div>
<div style="left:6px;top:115px;width:1297px;height:1px;background:#9c9c9c"></div>
<div style="left:6px;top:116px;width:1297px;height:1px;background:#f6f6f6"></div>
<div style="left:6px;top:116px;width:1px;height:36px;background:#f8f8f8"></div>
<span style="left:12px;top:98.8px;font:bold 11px 'DejaVu Sans','Liberation Sans',sans-serif;color:#4a4a4a;letter-spacing:0.45px;height:17px;line-height:17px;">View</span>
<div style="left:1311px;top:97px;width:306px;height:57px;background:#ebebeb"></div>
<div style="left:1311px;top:97px;width:306px;height:1px;background:#828282"></div>
<div style="left:1311px;top:97px;width:1px;height:57px;background:#828282"></div>
<div style="left:1615px;top:98px;width:1px;height:55px;background:#b4b4b4"></div>
<div style="left:1616px;top:97px;width:1px;height:57px;background:#7c7c7c"></div>
<div style="left:1312px;top:152px;width:304px;height:1px;background:#b4b4b4"></div>
<div style="left:1311px;top:153px;width:306px;height:1px;background:#7c7c7c"></div>
<div style="left:1312px;top:98px;width:5px;height:5px;background:#8a8a8a"></div>
<div style="left:1610px;top:98px;width:5px;height:5px;background:#8a8a8a"></div>
<div style="left:1312px;top:98px;width:303px;height:17px;background:linear-gradient(90deg,#e5ecf6,#eef3fa 60%,#e9eff8);border-radius:5px 5px 0 0"></div>
<div style="left:1312px;top:115px;width:303px;height:1px;background:#9c9c9c"></div>
<div style="left:1312px;top:116px;width:303px;height:1px;background:#f6f6f6"></div>
<div style="left:1312px;top:116px;width:1px;height:36px;background:#f8f8f8"></div>
<span style="left:1318px;top:98.8px;font:bold 11px 'DejaVu Sans','Liberation Sans',sans-serif;color:#4a4a4a;letter-spacing:0.45px;height:17px;line-height:17px;">Sensor</span>
<div style="left:1621px;top:97px;width:120px;height:57px;background:#ebebeb"></div>
<div style="left:1621px;top:97px;width:120px;height:1px;background:#828282"></div>
<div style="left:1621px;top:97px;width:1px;height:57px;background:#828282"></div>
<div style="left:1739px;top:98px;width:1px;height:55px;background:#b4b4b4"></div>
<div style="left:1740px;top:97px;width:1px;height:57px;background:#7c7c7c"></div>
<div style="left:1622px;top:152px;width:118px;height:1px;background:#b4b4b4"></div>
<div style="left:1621px;top:153px;width:120px;height:1px;background:#7c7c7c"></div>
<div style="left:1622px;top:98px;width:5px;height:5px;background:#8a8a8a"></div>
<div style="left:1734px;top:98px;width:5px;height:5px;background:#8a8a8a"></div>
<div style="left:1622px;top:98px;width:117px;height:17px;background:linear-gradient(90deg,#e5ecf6,#eef3fa 60%,#e9eff8);border-radius:5px 5px 0 0"></div>
<div style="left:1622px;top:115px;width:117px;height:1px;background:#9c9c9c"></div>
<div style="left:1622px;top:116px;width:117px;height:1px;background:#f6f6f6"></div>
<div style="left:1622px;top:116px;width:1px;height:36px;background:#f8f8f8"></div>
<span style="left:1628px;top:98.8px;font:bold 11px 'DejaVu Sans','Liberation Sans',sans-serif;color:#4a4a4a;letter-spacing:0.45px;height:17px;line-height:17px;">Generator</span>
<div style="left:1745px;top:97px;width:150px;height:57px;background:#ebebeb"></div>
<div style="left:1745px;top:97px;width:150px;height:1px;background:#828282"></div>
<div style="left:1745px;top:97px;width:1px;height:57px;background:#828282"></div>
<div style="left:1893px;top:98px;width:1px;height:55px;background:#b4b4b4"></div>
<div style="left:1894px;top:97px;width:1px;height:57px;background:#7c7c7c"></div>
<div style="left:1746px;top:152px;width:148px;height:1px;background:#b4b4b4"></div>
<div style="left:1745px;top:153px;width:150px;height:1px;background:#7c7c7c"></div>
<div style="left:1746px;top:98px;width:5px;height:5px;background:#8a8a8a"></div>
<div style="left:1888px;top:98px;width:5px;height:5px;background:#8a8a8a"></div>
<div style="left:1746px;top:98px;width:147px;height:17px;background:linear-gradient(90deg,#e5ecf6,#eef3fa 60%,#e9eff8);border-radius:5px 5px 0 0"></div>
<div style="left:1746px;top:115px;width:147px;height:1px;background:#9c9c9c"></div>
<div style="left:1746px;top:116px;width:147px;height:1px;background:#f6f6f6"></div>
<div style="left:1746px;top:116px;width:1px;height:36px;background:#f8f8f8"></div>
<span style="left:1752px;top:98.8px;font:bold 11px 'DejaVu Sans','Liberation Sans',sans-serif;color:#4a4a4a;letter-spacing:0.45px;height:17px;line-height:17px;">Parameters</span>
<div style="left:1815px;top:162px;width:80px;height:99px;background:#ebebeb"></div>
<div style="left:1815px;top:162px;width:80px;height:1px;background:#828282"></div>
<div style="left:1815px;top:162px;width:1px;height:99px;background:#828282"></div>
<div style="left:1893px;top:163px;width:1px;height:97px;background:#b4b4b4"></div>
<div style="left:1894px;top:162px;width:1px;height:99px;background:#7c7c7c"></div>
<div style="left:1816px;top:259px;width:78px;height:1px;background:#b4b4b4"></div>
<div style="left:1815px;top:260px;width:80px;height:1px;background:#7c7c7c"></div>
<div style="left:1816px;top:163px;width:5px;height:5px;background:#8a8a8a"></div>
<div style="left:1888px;top:163px;width:5px;height:5px;background:#8a8a8a"></div>
<div style="left:1816px;top:163px;width:77px;height:17px;background:linear-gradient(90deg,#e5ecf6,#eef3fa 60%,#e9eff8);border-radius:5px 5px 0 0"></div>
<div style="left:1816px;top:180px;width:77px;height:1px;background:#9c9c9c"></div>
<div style="left:1816px;top:181px;width:77px;height:1px;background:#f6f6f6"></div>
<div style="left:1816px;top:181px;width:1px;height:78px;background:#f8f8f8"></div>
<span style="left:1822px;top:163.8px;font:bold 11px 'DejaVu Sans','Liberation Sans',sans-serif;color:#4a4a4a;letter-spacing:0.45px;height:17px;line-height:17px;">Display</span>
<div style="left:5px;top:387px;width:378px;height:629px;background:#ebebeb"></div>
<div style="left:5px;top:387px;width:378px;height:1px;background:#828282"></div>
<div style="left:5px;top:387px;width:1px;height:629px;background:#828282"></div>
<div style="left:381px;top:388px;width:1px;height:627px;background:#b4b4b4"></div>
<div style="left:382px;top:387px;width:1px;height:629px;background:#7c7c7c"></div>
<div style="left:6px;top:1014px;width:376px;height:1px;background:#b4b4b4"></div>
<div style="left:5px;top:1015px;width:378px;height:1px;background:#7c7c7c"></div>
<div style="left:6px;top:388px;width:5px;height:5px;background:#8a8a8a"></div>
<div style="left:376px;top:388px;width:5px;height:5px;background:#8a8a8a"></div>
<div style="left:6px;top:388px;width:375px;height:17px;background:linear-gradient(90deg,#e5ecf6,#eef3fa 60%,#e9eff8);border-radius:5px 5px 0 0"></div>
<div style="left:6px;top:405px;width:375px;height:1px;background:#9c9c9c"></div>
<div style="left:6px;top:406px;width:375px;height:1px;background:#f6f6f6"></div>
<div style="left:6px;top:406px;width:1px;height:608px;background:#f8f8f8"></div>
<span style="left:12px;top:388.8px;font:bold 11px 'DejaVu Sans','Liberation Sans',sans-serif;color:#4a4a4a;letter-spacing:0.45px;height:17px;line-height:17px;">Selected color</span>
<div style="left:391px;top:387px;width:1504px;height:629px;background:#ebebeb"></div>
<div style="left:391px;top:387px;width:1504px;height:1px;background:#828282"></div>
<div style="left:391px;top:387px;width:1px;height:629px;background:#828282"></div>
<div style="left:1893px;top:388px;width:1px;height:627px;background:#b4b4b4"></div>
<div style="left:1894px;top:387px;width:1px;height:629px;background:#7c7c7c"></div>
<div style="left:392px;top:1014px;width:1502px;height:1px;background:#b4b4b4"></div>
<div style="left:391px;top:1015px;width:1504px;height:1px;background:#7c7c7c"></div>
<div style="left:392px;top:388px;width:5px;height:5px;background:#8a8a8a"></div>
<div style="left:1888px;top:388px;width:5px;height:5px;background:#8a8a8a"></div>
<div style="left:392px;top:388px;width:1501px;height:17px;background:linear-gradient(90deg,#e5ecf6,#eef3fa 60%,#e9eff8);border-radius:5px 5px 0 0"></div>
<div style="left:392px;top:405px;width:1501px;height:1px;background:#9c9c9c"></div>
<div style="left:392px;top:406px;width:1501px;height:1px;background:#f6f6f6"></div>
<div style="left:392px;top:406px;width:1px;height:608px;background:#f8f8f8"></div>
<span style="left:398px;top:388.8px;font:bold 11px 'DejaVu Sans','Liberation Sans',sans-serif;color:#4a4a4a;letter-spacing:0.45px;height:17px;line-height:17px;">Information</span>
<div style="left:7px;top:120px;width:199px;height:22px;background:#fff;box-sizing:border-box;border:1px solid;border-color:#828282 #fff #fff #828282"></div>
<div style="left:8px;top:121px;width:197px;height:20px;background:#fff;box-sizing:border-box;border:1px solid;border-color:#696969 #e3e3e3 #e3e3e3 #696969"></div>
<span style="left:11px;top:124px;font:12.5px 'DejaVu Sans','Liberation Sans',sans-serif;color:#000;height:18px;line-height:18px;">Blue saturation scale</span>
<div style="left:188px;top:122px;width:16px;height:19px;background:#f0f0f0;box-sizing:border-box;border:1px solid;border-color:#e3e3e3 #696969 #696969 #e3e3e3"></div>
<div style="left:189px;top:123px;width:14px;height:17px;background:#f0f0f0;box-sizing:border-box;border:1px solid;border-color:#fff #a0a0a0 #a0a0a0 #fff"></div>
<svg style="left:192px;top:130px" width="9" height="5" viewBox="0 0 9 5"><path d="M0.500 0h8l-4 4.500z" fill="#000"/></svg>
<div style="left:216px;top:118px;width:1056px;height:27px;background:#f0f0f0;box-sizing:border-box;border:1px solid;border-color:#a0a0a0 #fff #fff #a0a0a0"></div>
<span style="left:218px;top:119px;font:bold 16px 'Liberation Sans',sans-serif;color:#000;white-space:nowrap;letter-spacing:0px;height:18px;line-height:18px;">Color Space: HDTV Rec709 modified, White Point: CUSTOM, EOTF:&nbsp; SDR, Power law (black compensation) w/gamma = 2.40, # of measur...</span>
<div style="left:1277px;top:120px;width:19px;height:12px;background:#f0f0f0;box-sizing:border-box;border:1px solid;border-color:#e3e3e3 #696969 #696969 #e3e3e3"></div>
<div style="left:1278px;top:121px;width:17px;height:10px;background:#f0f0f0;box-sizing:border-box;border:1px solid;border-color:#fff #a0a0a0 #a0a0a0 #fff"></div>
<div style="left:1277px;top:132px;width:19px;height:13px;background:#f0f0f0;box-sizing:border-box;border:1px solid;border-color:#e3e3e3 #696969 #696969 #e3e3e3"></div>
<div style="left:1278px;top:133px;width:17px;height:11px;background:#f0f0f0;box-sizing:border-box;border:1px solid;border-color:#fff #a0a0a0 #a0a0a0 #fff"></div>
<svg style="left:1283px;top:124px" width="7" height="4" viewBox="0 0 7 4"><path d="M0 4h7l-3.500-4z" fill="#000"/></svg>
<svg style="left:1283px;top:137px" width="7" height="4" viewBox="0 0 7 4"><path d="M0 0h7l-3.500 4z" fill="#000"/></svg>
<div style="left:1314px;top:117px;width:296px;height:15px;background:#f0f0f0"></div>
<span style="left:1316px;top:117px;font:12.5px 'DejaVu Sans','Liberation Sans',sans-serif;color:#000;height:15px;line-height:15px;">Simulated sensor</span>
<div style="left:1316px;top:134px;width:68px;height:15px;background:#f0f0f0"></div>
<span style="left:1318px;top:134px;font:12.5px 'DejaVu Sans','Liberation Sans',sans-serif;color:#000;height:15px;line-height:15px;">Adaptive</span>
<svg style="left:1423px;top:134px" width="14" height="15" viewBox="0 0 14 15"><path d="M1 1l12 6.500-12 6.500z" fill="#7ee05a" stroke="#58b838" stroke-width="1"/></svg>
<svg style="left:1587px;top:132px" width="20" height="19" viewBox="0 0 20 19"><defs><linearGradient id="cfg" x1="0" y1="0" x2="1" y2="1"><stop offset="0" stop-color="#f4f8ff"/><stop offset="1" stop-color="#a8c8f4"/></linearGradient></defs><path d="M2.200 3l9.300-1.700 1.700 13.200-9.300 2z" fill="url(#cfg)" stroke="#2a62d2" stroke-width="2.200" stroke-linejoin="round"/><path d="M2.500 16.500l10.500-2" stroke="#1c3c94" stroke-width="1.200"/><path d="M5.500 9l2.500 2.500 3.500-5" stroke="#dcb43c" stroke-width="1.500" fill="none"/><path d="M10.500 12l6-4" stroke="#5c9cec" stroke-width="1.800" fill="none"/><circle cx="17.300" cy="7.300" r="1.300" fill="#e04830"/></svg>
<span style="left:1624px;top:117px;font:12.5px 'DejaVu Sans','Liberation Sans',sans-serif;color:#000;letter-spacing:-0.2px;height:15px;line-height:15px;">DVD manual</span>
<svg style="left:1717px;top:133px" width="20" height="19" viewBox="0 0 20 19"><defs><linearGradient id="cfg" x1="0" y1="0" x2="1" y2="1"><stop offset="0" stop-color="#f4f8ff"/><stop offset="1" stop-color="#a8c8f4"/></linearGradient></defs><path d="M2.200 3l9.300-1.700 1.700 13.200-9.300 2z" fill="url(#cfg)" stroke="#2a62d2" stroke-width="2.200" stroke-linejoin="round"/><path d="M2.500 16.500l10.500-2" stroke="#1c3c94" stroke-width="1.200"/><path d="M5.500 9l2.500 2.500 3.500-5" stroke="#dcb43c" stroke-width="1.500" fill="none"/><path d="M10.500 12l6-4" stroke="#5c9cec" stroke-width="1.800" fill="none"/><circle cx="17.300" cy="7.300" r="1.300" fill="#e04830"/></svg>
<div style="left:1752px;top:117px;width:64px;height:15px;background:#f0f0f0"></div>
<div style="left:1754px;top:119px;width:13px;height:13px;background:#fff;box-sizing:border-box;border:1px solid;border-color:#828282 #fff #fff #828282"></div>
<div style="left:1755px;top:120px;width:11px;height:11px;background:#fff;box-sizing:border-box;border:1px solid;border-color:#696969 #e3e3e3 #e3e3e3 #696969"></div>
<span style="left:1773px;top:118px;font:12.5px 'DejaVu Sans','Liberation Sans',sans-serif;color:#000;height:16px;line-height:16px;">Reference</span>
<div style="left:1752px;top:134px;width:132px;height:17px;background:#f0f0f0"></div>
<div style="left:1754px;top:136px;width:13px;height:13px;background:#fff;box-sizing:border-box;border:1px solid;border-color:#828282 #fff #fff #828282"></div>
<div style="left:1755px;top:137px;width:11px;height:11px;background:#f0f0f0;box-sizing:border-box;border:1px solid;border-color:#696969 #e3e3e3 #e3e3e3 #696969"></div>
<span style="left:1773px;top:135px;font:12.5px 'DejaVu Sans','Liberation Sans',sans-serif;color:#a0a0a0;text-shadow:1px 1px 0 #fff;height:16px;line-height:16px;">XYZ Adjustment</span>
<div style="left:1822px;top:181px;width:66px;height:14px;background:#f0f0f0"></div>
<svg style="left:1822px;top:181px" width="13" height="13" viewBox="0 0 13 13"><circle cx="6.500" cy="6.500" r="5.500" fill="#f0f0f0"/><path d="M2.600 10.400A5.500 5.500 0 0 1 10.400 2.600" stroke="#696969" stroke-width="1.300" fill="none"/><path d="M10.400 2.600A5.500 5.500 0 0 1 2.600 10.400" stroke="#fff" stroke-width="1.300" fill="none"/></svg>
<span style="left:1841px;top:181px;font:12.5px 'DejaVu Sans','Liberation Sans',sans-serif;color:#a0a0a0;text-shadow:1px 1px 0 #fff;height:16px;line-height:16px;">Sensor</span>
<div style="left:1822px;top:197px;width:66px;height:14px;background:#f0f0f0"></div>
<svg style="left:1822px;top:197px" width="13" height="13" viewBox="0 0 13 13"><circle cx="6.500" cy="6.500" r="5.500" fill="#fff"/><path d="M2.600 10.400A5.500 5.500 0 0 1 10.400 2.600" stroke="#696969" stroke-width="1.300" fill="none"/><path d="M10.400 2.600A5.500 5.500 0 0 1 2.600 10.400" stroke="#fff" stroke-width="1.300" fill="none"/></svg>
<span style="left:1841px;top:197px;font:12.5px 'DejaVu Sans','Liberation Sans',sans-serif;color:#000;height:16px;line-height:16px;">RGB</span>
<div style="left:1822px;top:213px;width:66px;height:14px;background:#f0f0f0"></div>
<svg style="left:1822px;top:213px" width="13" height="13" viewBox="0 0 13 13"><circle cx="6.500" cy="6.500" r="5.500" fill="#fff"/><path d="M2.600 10.400A5.500 5.500 0 0 1 10.400 2.600" stroke="#696969" stroke-width="1.300" fill="none"/><path d="M10.400 2.600A5.500 5.500 0 0 1 2.600 10.400" stroke="#fff" stroke-width="1.300" fill="none"/></svg>
<span style="left:1841px;top:213px;font:12.5px 'DejaVu Sans','Liberation Sans',sans-serif;color:#000;height:16px;line-height:16px;">XYZ</span>
<div style="left:1822px;top:229px;width:66px;height:14px;background:#f0f0f0"></div>
<svg style="left:1822px;top:229px" width="13" height="13" viewBox="0 0 13 13"><circle cx="6.500" cy="6.500" r="5.500" fill="#fff"/><path d="M2.600 10.400A5.500 5.500 0 0 1 10.400 2.600" stroke="#696969" stroke-width="1.300" fill="none"/><path d="M10.400 2.600A5.500 5.500 0 0 1 2.600 10.400" stroke="#fff" stroke-width="1.300" fill="none"/></svg>
<span style="left:1841px;top:229px;font:12.5px 'DejaVu Sans','Liberation Sans',sans-serif;color:#000;height:16px;line-height:16px;">xyz</span>
<div style="left:1822px;top:244px;width:66px;height:14px;background:#f0f0f0"></div>
<svg style="left:1822px;top:245px" width="13" height="13" viewBox="0 0 13 13"><circle cx="6.500" cy="6.500" r="5.500" fill="#fff"/><path d="M2.600 10.400A5.500 5.500 0 0 1 10.400 2.600" stroke="#696969" stroke-width="1.300" fill="none"/><path d="M10.400 2.600A5.500 5.500 0 0 1 2.600 10.400" stroke="#fff" stroke-width="1.300" fill="none"/><circle cx="6.500" cy="6.500" r="2" fill="#000"/></svg>
<span style="left:1841px;top:244px;font:12.5px 'DejaVu Sans','Liberation Sans',sans-serif;color:#000;height:16px;line-height:16px;">xyY</span>
<div style="left:1812px;top:264px;width:83px;height:30px;background:#ebebeb;box-sizing:border-box;border:1px solid;border-color:#fff #a0a0a0 #a0a0a0 #fff"></div>
<span style="left:1863px;top:273px;font:12.5px 'DejaVu Sans','Liberation Sans',sans-serif;color:#000;height:16px;line-height:16px;">Go</span>
<div style="left:1812px;top:265px;width:82px;height:1px;background:#fff"></div>
<div style="left:1812px;top:294px;width:83px;height:30px;background:#ebebeb;box-sizing:border-box;border:1px solid;border-color:#fff #a0a0a0 #a0a0a0 #fff"></div>
<span style="left:1851px;top:302px;font:12.5px 'DejaVu Sans','Liberation Sans',sans-serif;color:#000;height:16px;line-height:16px;">Delete</span>
<div style="left:1812px;top:324px;width:83px;height:30px;background:#ebebeb;box-sizing:border-box;border:1px solid;border-color:#fff #a0a0a0 #a0a0a0 #fff"></div>
<span style="left:1858px;top:332px;font:12.5px 'DejaVu Sans','Liberation Sans',sans-serif;color:#000;height:16px;line-height:16px;">Refs</span>
<svg style="left:1812px;top:262px" width="48" height="94" viewBox="1812 262 48 94"><polygon points="1818.5,267.2 1825.1,267.2 1825.1,271.6 1826.8,271.6 1826.8,275.9 1824.2,275.9 1824.2,279.4 1826.8,279.4 1826.8,284.6 1823.3,284.6 1823.3,288.1 1818.5,288.1" fill="#b4b4b4" stroke="#6a6a6a" stroke-width="0.500"/><polygon points="1849.4,271.6 1842.5,271.6 1842.5,274.2 1845.1,275.1 1845.1,278.5 1842.5,278.5 1842.5,282.9 1845.9,282.9 1845.9,287.2 1843.3,288.1 1843.3,292.5 1849.4,292.5" fill="#b4b4b4" stroke="#6a6a6a" stroke-width="0.500"/><path d="M1818.8 267.2V288.5M1849.2 271.1V292.6" stroke="#111" stroke-width="1" stroke-dasharray="1.300 0.900"/><polygon points="1823.3,267.2 1839.0,267.2 1840.7,273.3 1839.9,279.4 1843.3,284.6 1847.7,285.5 1842.5,292.5 1831.1,292.5 1828.5,288.1 1827.7,279.4 1826.8,271.6" fill="#141490"/><polygon points="1828.1,267.4 1835.1,267.4 1833.8,270.7 1829.0,270.3" fill="#3c8cf4"/><polygon points="1830.7,272.9 1837.2,271.6 1836.8,279.0 1831.6,279.8" fill="#3a7cf0"/><polygon points="1833.3,284.6 1838.5,282.5 1842.5,285.9 1837.2,291.2" fill="#4aa0ff"/><polygon points="1838.5,268.5 1840.3,273.3 1839.0,279.8 1842.0,284.2 1839.9,281.6 1837.9,278.5 1838.1,272.4" fill="#2a2ab8"/><defs><linearGradient id="bin" x1="0" y1="0" x2="1" y2="1"><stop offset="0" stop-color="#f0f8ff"/><stop offset="0.5" stop-color="#b4d8f8"/><stop offset="1" stop-color="#84b8e8"/></linearGradient></defs><path d="M1819.8 299.4L1846.4 296.4L1844.6 317.7Q1836.4 322.1 1823.7 320.3z" fill="url(#bin)" stroke="#a8ccec" stroke-width="0.600"/><path d="M1819.8 299.4L1846.4 296.4L1846.1 299.4Q1833.8 296.8 1820.3 302.9z" fill="#8cc0f0" opacity="0.700"/><ellipse cx="1833.8" cy="316.8" rx="9.500" ry="3" fill="#e8f4ff" opacity="0.700" transform="rotate(-8 1833.8 316.8)"/><g transform="translate(1837.2 310.5)" fill="#16a02c"><path d="M-5 0.500a5 5.500 0 0 1 7-5l0.300-2 3.200 4-4.400 2 0.400-1.800a2.800 3 0 0 0-3.700 2.800z"/><path d="M5 0a5 5.500 0 0 1-7 5l-0.300 2-3.200-4 4.400-2-0.400 1.800a2.800 3 0 0 0 3.700-2.800z"/></g><polygon points="1818.1,350.8 1818.1,340.3 1819.8,338.6 1819.8,350.8" fill="#000080"/><polygon points="1819.8,350.8 1819.8,338.6 1822.0,336.0 1822.0,350.8" fill="#ff00ff"/><polygon points="1822.0,350.8 1822.0,336.0 1823.1,332.9 1824.2,331.6 1825.2,332.9 1825.9,334.2 1825.9,350.8" fill="#0000ff"/><polygon points="1825.9,350.8 1825.9,334.2 1827.2,335.1 1829.0,336.8 1829.0,350.8" fill="#00ffff"/><polygon points="1829.0,350.8 1829.0,336.8 1831.1,337.7 1832.9,336.0 1832.9,350.8" fill="#00ff00"/><polygon points="1832.9,350.8 1832.9,336.0 1834.2,331.6 1835.5,329.9 1836.8,329.4 1838.1,330.8 1839.0,331.6 1839.0,350.8" fill="#ffff00"/><polygon points="1839.0,350.8 1839.0,331.6 1839.9,332.5 1841.6,336.0 1842.9,337.3 1842.9,350.8" fill="#800000"/><polygon points="1842.9,350.8 1842.9,337.3 1843.3,337.7 1845.1,338.6 1846.1,337.0 1847.7,337.0 1848.6,338.4 1849.9,338.6 1849.9,350.8" fill="#ff0000"/><polyline points="1818.1,340.3 1819.8,338.6 1822.0,336.0 1823.1,332.9 1824.2,331.6 1825.2,332.9 1825.9,334.2 1827.2,335.1 1829.0,336.8 1831.1,337.7 1832.9,336.0 1834.2,331.6 1835.5,329.9 1836.8,329.4 1838.1,330.8 1839.9,332.5 1841.6,336.0 1843.3,337.7 1845.1,338.6 1846.1,337.0 1847.7,337.0 1848.6,338.4 1849.9,338.6" fill="none" stroke="#ffff00" stroke-width="1"/></svg>
<div style="left:1818px;top:358px;width:56px;height:18px;background:#f0f0f0"></div>
<div style="left:1819px;top:360px;width:13px;height:13px;background:#fff;box-sizing:border-box;border:1px solid;border-color:#828282 #fff #fff #828282"></div>
<div style="left:1820px;top:361px;width:11px;height:11px;background:#fff;box-sizing:border-box;border:1px solid;border-color:#696969 #e3e3e3 #e3e3e3 #696969"></div>
<span style="left:1837px;top:359px;font:12.5px 'DejaVu Sans','Liberation Sans',sans-serif;color:#000;height:16px;line-height:16px;">Edit</span>
<div style="left:5px;top:162px;width:1804px;height:216px;background:#ebebeb"></div>
<div style="left:6px;top:163px;width:1802px;height:16px;background:linear-gradient(90deg,#e6edf7,#eff4fb 60%,#eaf0f8);border-radius:4px 5px 0 0"></div>
<div style="left:5px;top:162px;width:1803px;height:1px;background:#828282"></div>
<div style="left:5px;top:162px;width:1px;height:17px;background:#828282"></div>
<div style="left:5px;top:179px;width:1px;height:199px;background:#f4f4f4"></div>
<div style="left:6px;top:179px;width:1px;height:198px;background:#00d400"></div>
<div style="left:6px;top:376px;width:1802px;height:1px;background:#00d400"></div>
<div style="left:1790px;top:179px;width:18px;height:1px;background:#00d400"></div>
<div style="left:1798px;top:163px;width:10px;height:214px;border:1px solid #00d400;border-left:0;border-bottom:0;border-top-right-radius:5px;box-sizing:border-box;border-top-color:transparent"></div>
<div style="left:1802px;top:163px;width:6px;height:6px;border:1px solid #00d400;border-left:0;border-bottom:0;border-top-right-radius:5px;box-sizing:border-box"></div>
<div style="left:7px;top:375px;width:1800px;height:1px;background:#fbe9fb"></div>
<div style="left:1806px;top:180px;width:1px;height:196px;background:#fbe9fb"></div>
<div style="left:5px;top:377px;width:1804px;height:1px;background:#f4f4f4"></div>
<div style="left:7px;top:163px;width:600px;height:14px;overflow:hidden"><span style="left:8px;top:2.5px;font:bold 9px 'DejaVu Sans','Liberation Sans',sans-serif;color:#4a4a4a;white-space:nowrap;letter-spacing:-0.05px;line-height:13px">( Average dE: 1.18 [0.62,0.78,0.32] max: 1.83 [CIE2000] )</span></div>
<div style="left:8px;top:176px;width:1782px;height:198px;background:#f0f0f0;box-sizing:border-box;border:1px solid;border-color:#8c8c8c #fff #fff #8c8c8c"></div>
<div style="left:9px;top:177px;width:1780px;height:196px;background:#f0f0f0;box-sizing:border-box;border:1px solid;border-color:#6e6e6e #f0f0f0 #f0f0f0 #6e6e6e"></div>
<div style="left:10px;top:178px;width:53px;height:22px;background:#f0f0f0;box-sizing:border-box;border:1px solid;border-color:#fff transparent transparent #fff"></div>
<div style="left:63px;top:178px;width:1px;height:23px;background:#6e6e6e"></div>
<span style="left:10px;top:181px;font:bold 12px 'Liberation Sans',sans-serif;color:#000;width:53px;text-align:center;height:18px;line-height:18px;">% Sat</span>
<div style="left:64px;top:178px;width:341px;height:22px;background:#f0f0f0;box-sizing:border-box;border:1px solid;border-color:#fff transparent transparent #fff"></div>
<div style="left:405px;top:178px;width:1px;height:23px;background:#6e6e6e"></div>
<span style="left:64px;top:181px;font:bold 12px 'Liberation Sans',sans-serif;color:#000;width:341px;text-align:center;height:18px;line-height:18px;">0</span>
<div style="left:406px;top:178px;width:341px;height:22px;background:#c0c0f0;box-sizing:border-box;border:1px solid;border-color:#fff #c0c0f0 #c0c0f0 #fff"></div>
<div style="left:747px;top:178px;width:1px;height:23px;background:#6e6e6e"></div>
<span style="left:406px;top:181px;font:bold 12px 'Liberation Sans',sans-serif;color:#000;width:341px;text-align:center;height:18px;line-height:18px;">25</span>
<div style="left:748px;top:178px;width:340px;height:22px;background:#9090f0;box-sizing:border-box;border:1px solid;border-color:#fff #9090f0 #9090f0 #fff"></div>
<div style="left:1088px;top:178px;width:1px;height:23px;background:#6e6e6e"></div>
<span style="left:748px;top:181px;font:bold 12px 'Liberation Sans',sans-serif;color:#000;width:340px;text-align:center;height:18px;line-height:18px;">50</span>
<div style="left:1089px;top:178px;width:340px;height:22px;background:#6060f0;box-sizing:border-box;border:1px solid;border-color:#fff #6060f0 #6060f0 #fff"></div>
<div style="left:1429px;top:178px;width:1px;height:23px;background:#6e6e6e"></div>
<span style="left:1089px;top:181px;font:bold 12px 'Liberation Sans',sans-serif;color:#000;width:340px;text-align:center;height:18px;line-height:18px;">75</span>
<div style="left:1430px;top:178px;width:340px;height:22px;background:#3030f0;box-sizing:border-box;border:1px solid;border-color:#fff #3030f0 #3030f0 #fff"></div>
<div style="left:1770px;top:178px;width:1px;height:23px;background:#6e6e6e"></div>
<span style="left:1430px;top:181px;font:bold 12px 'Liberation Sans',sans-serif;color:#000;width:340px;text-align:center;height:18px;line-height:18px;">100</span>
<div style="left:10px;top:200px;width:1761px;height:1px;background:#6e6e6e"></div>
<div style="left:10px;top:201px;width:53px;height:24px;background:#f0f0f0;box-sizing:border-box;border:1px solid;border-color:#fff #f0f0f0 #f0f0f0 #fff"></div>
<div style="left:63px;top:201px;width:1px;height:25px;background:#6e6e6e"></div>
<div style="left:10px;top:225px;width:54px;height:1px;background:#6e6e6e"></div>
<span style="left:10px;top:206px;font:bold 12px 'Liberation Sans',sans-serif;color:#000;width:54px;text-align:center;letter-spacing:-0.2px;height:17px;line-height:17px;">x</span>
<div style="left:64px;top:201px;width:341px;height:24px;background:#fff"></div>
<div style="left:405px;top:201px;width:1px;height:25px;background:#c0c0c0"></div>
<span style="left:64px;top:206px;font:12px 'Liberation Sans',sans-serif;color:#000;width:340px;text-align:right;letter-spacing:-0.55px;height:17px;line-height:17px;">0.3152</span>
<div style="left:406px;top:201px;width:341px;height:24px;background:#fff"></div>
<div style="left:747px;top:201px;width:1px;height:25px;background:#c0c0c0"></div>
<span style="left:406px;top:206px;font:12px 'Liberation Sans',sans-serif;color:#000;width:340px;text-align:right;letter-spacing:-0.55px;height:17px;line-height:17px;">0.2672</span>
<div style="left:748px;top:201px;width:340px;height:24px;background:#fff"></div>
<div style="left:1088px;top:201px;width:1px;height:25px;background:#c0c0c0"></div>
<span style="left:748px;top:206px;font:12px 'Liberation Sans',sans-serif;color:#000;width:339px;text-align:right;letter-spacing:-0.55px;height:17px;line-height:17px;">0.2258</span>
<div style="left:1089px;top:201px;width:340px;height:24px;background:#fff"></div>
<div style="left:1429px;top:201px;width:1px;height:25px;background:#c0c0c0"></div>
<span style="left:1089px;top:206px;font:12px 'Liberation Sans',sans-serif;color:#000;width:339px;text-align:right;letter-spacing:-0.55px;height:17px;line-height:17px;">0.1836</span>
<div style="left:1430px;top:201px;width:340px;height:24px;background:#fff"></div>
<div style="left:1770px;top:201px;width:1px;height:25px;background:#c0c0c0"></div>
<span style="left:1430px;top:206px;font:12px 'Liberation Sans',sans-serif;color:#000;width:339px;text-align:right;letter-spacing:-0.55px;height:17px;line-height:17px;">0.1474</span>
<div style="left:64px;top:225px;width:1707px;height:1px;background:#c0c0c0"></div>
<div style="left:10px;top:226px;width:53px;height:24px;background:#f0f0f0;box-sizing:border-box;border:1px solid;border-color:#fff #f0f0f0 #f0f0f0 #fff"></div>
<div style="left:63px;top:226px;width:1px;height:25px;background:#6e6e6e"></div>
<div style="left:10px;top:250px;width:54px;height:1px;background:#6e6e6e"></div>
<span style="left:10px;top:231px;font:bold 12px 'Liberation Sans',sans-serif;color:#000;width:54px;text-align:center;letter-spacing:-0.2px;height:17px;line-height:17px;">y</span>
<div style="left:64px;top:226px;width:341px;height:24px;background:#fff"></div>
<div style="left:405px;top:226px;width:1px;height:25px;background:#c0c0c0"></div>
<span style="left:64px;top:231px;font:12px 'Liberation Sans',sans-serif;color:#000;width:340px;text-align:right;letter-spacing:-0.55px;height:17px;line-height:17px;">0.3295</span>
<div style="left:406px;top:226px;width:341px;height:24px;background:#fff"></div>
<div style="left:747px;top:226px;width:1px;height:25px;background:#c0c0c0"></div>
<span style="left:406px;top:231px;font:12px 'Liberation Sans',sans-serif;color:#000;width:340px;text-align:right;letter-spacing:-0.55px;height:17px;line-height:17px;">0.2526</span>
<div style="left:748px;top:226px;width:340px;height:24px;background:#fff"></div>
<div style="left:1088px;top:226px;width:1px;height:25px;background:#c0c0c0"></div>
<span style="left:748px;top:231px;font:12px 'Liberation Sans',sans-serif;color:#000;width:339px;text-align:right;letter-spacing:-0.55px;height:17px;line-height:17px;">0.1863</span>
<div style="left:1089px;top:226px;width:340px;height:24px;background:#fff"></div>
<div style="left:1429px;top:226px;width:1px;height:25px;background:#c0c0c0"></div>
<span style="left:1089px;top:231px;font:12px 'Liberation Sans',sans-serif;color:#000;width:339px;text-align:right;letter-spacing:-0.55px;height:17px;line-height:17px;">0.1173</span>
<div style="left:1430px;top:226px;width:340px;height:24px;background:#fff"></div>
<div style="left:1770px;top:226px;width:1px;height:25px;background:#c0c0c0"></div>
<span style="left:1430px;top:231px;font:12px 'Liberation Sans',sans-serif;color:#000;width:339px;text-align:right;letter-spacing:-0.55px;height:17px;line-height:17px;">0.0564</span>
<div style="left:64px;top:250px;width:1707px;height:1px;background:#c0c0c0"></div>
<div style="left:10px;top:251px;width:53px;height:24px;background:#f0f0f0;box-sizing:border-box;border:1px solid;border-color:#fff #f0f0f0 #f0f0f0 #fff"></div>
<div style="left:63px;top:251px;width:1px;height:25px;background:#6e6e6e"></div>
<div style="left:10px;top:275px;width:54px;height:1px;background:#6e6e6e"></div>
<span style="left:10px;top:256px;font:bold 12px 'Liberation Sans',sans-serif;color:#000;width:54px;text-align:center;letter-spacing:-0.2px;height:17px;line-height:17px;">Y</span>
<div style="left:64px;top:251px;width:341px;height:24px;background:#fff"></div>
<div style="left:405px;top:251px;width:1px;height:25px;background:#c0c0c0"></div>
<span style="left:64px;top:256px;font:12px 'Liberation Sans',sans-serif;color:#000;width:340px;text-align:right;letter-spacing:-0.55px;height:17px;line-height:17px;">6.812</span>
<div style="left:406px;top:251px;width:341px;height:24px;background:#fff"></div>
<div style="left:747px;top:251px;width:1px;height:25px;background:#c0c0c0"></div>
<span style="left:406px;top:256px;font:12px 'Liberation Sans',sans-serif;color:#000;width:340px;text-align:right;letter-spacing:-0.55px;height:17px;line-height:17px;">6.970</span>
<div style="left:748px;top:251px;width:340px;height:24px;background:#fff"></div>
<div style="left:1088px;top:251px;width:1px;height:25px;background:#c0c0c0"></div>
<span style="left:748px;top:256px;font:12px 'Liberation Sans',sans-serif;color:#000;width:339px;text-align:right;letter-spacing:-0.55px;height:17px;line-height:17px;">6.925</span>
<div style="left:1089px;top:251px;width:340px;height:24px;background:#fff"></div>
<div style="left:1429px;top:251px;width:1px;height:25px;background:#c0c0c0"></div>
<span style="left:1089px;top:256px;font:12px 'Liberation Sans',sans-serif;color:#000;width:339px;text-align:right;letter-spacing:-0.55px;height:17px;line-height:17px;">7.034</span>
<div style="left:1430px;top:251px;width:340px;height:24px;background:#fff"></div>
<div style="left:1770px;top:251px;width:1px;height:25px;background:#c0c0c0"></div>
<span style="left:1430px;top:256px;font:12px 'Liberation Sans',sans-serif;color:#000;width:339px;text-align:right;letter-spacing:-0.55px;height:17px;line-height:17px;">8.137</span>
<div style="left:64px;top:275px;width:1707px;height:1px;background:#c0c0c0"></div>
<div style="left:10px;top:276px;width:53px;height:24px;background:#f0f0f0;box-sizing:border-box;border:1px solid;border-color:#fff #f0f0f0 #f0f0f0 #fff"></div>
<div style="left:63px;top:276px;width:1px;height:25px;background:#6e6e6e"></div>
<div style="left:10px;top:300px;width:54px;height:1px;background:#6e6e6e"></div>
<span style="left:10px;top:281px;font:bold 12px 'Liberation Sans',sans-serif;color:#000;width:54px;text-align:center;letter-spacing:-0.2px;height:17px;line-height:17px;">Delta E</span>
<div style="left:64px;top:276px;width:341px;height:24px;background:#afffaf"></div>
<div style="left:405px;top:276px;width:1px;height:25px;background:#c0c0c0"></div>
<span style="left:64px;top:281px;font:bold 12px 'Liberation Sans',sans-serif;color:#000;width:340px;text-align:right;letter-spacing:-0.55px;height:17px;line-height:17px;">1.8</span>
<div style="left:406px;top:276px;width:341px;height:24px;background:#afffaf"></div>
<div style="left:747px;top:276px;width:1px;height:25px;background:#c0c0c0"></div>
<span style="left:406px;top:281px;font:bold 12px 'Liberation Sans',sans-serif;color:#000;width:340px;text-align:right;letter-spacing:-0.55px;height:17px;line-height:17px;">1.4</span>
<div style="left:748px;top:276px;width:340px;height:24px;background:#afffaf"></div>
<div style="left:1088px;top:276px;width:1px;height:25px;background:#c0c0c0"></div>
<span style="left:748px;top:281px;font:bold 12px 'Liberation Sans',sans-serif;color:#000;width:339px;text-align:right;letter-spacing:-0.55px;height:17px;line-height:17px;">0.8</span>
<div style="left:1089px;top:276px;width:340px;height:24px;background:#afffaf"></div>
<div style="left:1429px;top:276px;width:1px;height:25px;background:#c0c0c0"></div>
<span style="left:1089px;top:281px;font:bold 12px 'Liberation Sans',sans-serif;color:#000;width:339px;text-align:right;letter-spacing:-0.55px;height:17px;line-height:17px;">0.7</span>
<div style="left:1430px;top:276px;width:340px;height:24px;background:#afffaf"></div>
<div style="left:1770px;top:276px;width:1px;height:25px;background:#c0c0c0"></div>
<span style="left:1430px;top:281px;font:bold 12px 'Liberation Sans',sans-serif;color:#000;width:339px;text-align:right;letter-spacing:-0.55px;height:17px;line-height:17px;">1.2</span>
<div style="left:64px;top:300px;width:1707px;height:1px;background:#c0c0c0"></div>
<div style="left:10px;top:301px;width:53px;height:24px;background:#f0f0f0;box-sizing:border-box;border:1px solid;border-color:#fff #f0f0f0 #f0f0f0 #fff"></div>
<div style="left:63px;top:301px;width:1px;height:25px;background:#6e6e6e"></div>
<div style="left:10px;top:325px;width:54px;height:1px;background:#6e6e6e"></div>
<span style="left:10px;top:306px;font:bold 12px 'Liberation Sans',sans-serif;color:#000;width:54px;text-align:center;letter-spacing:-0.2px;height:17px;line-height:17px;">delta xy</span>
<div style="left:64px;top:301px;width:341px;height:24px;background:#f0f0f0"></div>
<div style="left:405px;top:301px;width:1px;height:25px;background:#c0c0c0"></div>
<span style="left:64px;top:306px;font:12px 'Liberation Sans',sans-serif;color:#000;width:340px;text-align:right;letter-spacing:-0.55px;height:17px;line-height:17px;">0.0062</span>
<div style="left:406px;top:301px;width:341px;height:24px;background:#f0f0f0"></div>
<div style="left:747px;top:301px;width:1px;height:25px;background:#c0c0c0"></div>
<span style="left:406px;top:306px;font:12px 'Liberation Sans',sans-serif;color:#000;width:340px;text-align:right;letter-spacing:-0.55px;height:17px;line-height:17px;">0.0059</span>
<div style="left:748px;top:301px;width:340px;height:24px;background:#f0f0f0"></div>
<div style="left:1088px;top:301px;width:1px;height:25px;background:#c0c0c0"></div>
<span style="left:748px;top:306px;font:12px 'Liberation Sans',sans-serif;color:#000;width:339px;text-align:right;letter-spacing:-0.55px;height:17px;line-height:17px;">0.0044</span>
<div style="left:1089px;top:301px;width:340px;height:24px;background:#f0f0f0"></div>
<div style="left:1429px;top:301px;width:1px;height:25px;background:#c0c0c0"></div>
<span style="left:1089px;top:306px;font:12px 'Liberation Sans',sans-serif;color:#000;width:339px;text-align:right;letter-spacing:-0.55px;height:17px;line-height:17px;">0.0003</span>
<div style="left:1430px;top:301px;width:340px;height:24px;background:#f0f0f0"></div>
<div style="left:1770px;top:301px;width:1px;height:25px;background:#c0c0c0"></div>
<span style="left:1430px;top:306px;font:12px 'Liberation Sans',sans-serif;color:#000;width:339px;text-align:right;letter-spacing:-0.55px;height:17px;line-height:17px;">0.0044</span>
<div style="left:64px;top:325px;width:1707px;height:1px;background:#c0c0c0"></div>
<div style="left:10px;top:326px;width:53px;height:24px;background:#f0f0f0;box-sizing:border-box;border:1px solid;border-color:#fff #f0f0f0 #f0f0f0 #fff"></div>
<div style="left:63px;top:326px;width:1px;height:25px;background:#6e6e6e"></div>
<div style="left:10px;top:350px;width:54px;height:1px;background:#6e6e6e"></div>
<span style="left:10px;top:331px;font:bold 12px 'Liberation Sans',sans-serif;color:#000;width:54px;text-align:center;letter-spacing:-0.2px;height:17px;line-height:17px;">delta L</span>
<div style="left:64px;top:326px;width:341px;height:24px;background:#e0e0e0"></div>
<div style="left:405px;top:326px;width:1px;height:25px;background:#c0c0c0"></div>
<span style="left:64px;top:331px;font:12px 'Liberation Sans',sans-serif;color:#000;width:340px;text-align:right;letter-spacing:-0.55px;height:17px;line-height:17px;">-4.0 %</span>
<div style="left:406px;top:326px;width:341px;height:24px;background:#e0e0e0"></div>
<div style="left:747px;top:326px;width:1px;height:25px;background:#c0c0c0"></div>
<span style="left:406px;top:331px;font:12px 'Liberation Sans',sans-serif;color:#000;width:340px;text-align:right;letter-spacing:-0.55px;height:17px;line-height:17px;">-4.4 %</span>
<div style="left:748px;top:326px;width:340px;height:24px;background:#e0e0e0"></div>
<div style="left:1088px;top:326px;width:1px;height:25px;background:#c0c0c0"></div>
<span style="left:748px;top:331px;font:12px 'Liberation Sans',sans-serif;color:#000;width:339px;text-align:right;letter-spacing:-0.55px;height:17px;line-height:17px;">-3.4 %</span>
<div style="left:1089px;top:326px;width:340px;height:24px;background:#e0e0e0"></div>
<div style="left:1429px;top:326px;width:1px;height:25px;background:#c0c0c0"></div>
<span style="left:1089px;top:331px;font:12px 'Liberation Sans',sans-serif;color:#000;width:339px;text-align:right;letter-spacing:-0.55px;height:17px;line-height:17px;">-5.0 %</span>
<div style="left:1430px;top:326px;width:340px;height:24px;background:#e0e0e0"></div>
<div style="left:1770px;top:326px;width:1px;height:25px;background:#c0c0c0"></div>
<span style="left:1430px;top:331px;font:12px 'Liberation Sans',sans-serif;color:#000;width:339px;text-align:right;letter-spacing:-0.55px;height:17px;line-height:17px;">-8.5 %</span>
<div style="left:64px;top:350px;width:1707px;height:1px;background:#c0c0c0"></div>
<div style="left:63px;top:351px;width:1px;height:4px;background:#6e6e6e"></div>
<div style="left:405px;top:351px;width:1px;height:4px;background:#c0c0c0"></div>
<div style="left:747px;top:351px;width:1px;height:4px;background:#c0c0c0"></div>
<div style="left:1088px;top:351px;width:1px;height:4px;background:#c0c0c0"></div>
<div style="left:1429px;top:351px;width:1px;height:4px;background:#c0c0c0"></div>
<div style="left:1770px;top:351px;width:1px;height:4px;background:#c0c0c0"></div>
<div style="left:10px;top:355px;width:1761px;height:1px;background:#fff"></div>
<div style="left:10px;top:356px;width:1778px;height:17px;background:#f0f0f0"></div>
<div style="left:1771px;top:178px;width:17px;height:177px;background:#f0f0f0"></div>
<div style="left:1779px;top:195px;width:2px;height:141px;background:#808080"></div>
<svg style="left:14px;top:360px" width="7" height="9" viewBox="0 0 7 9"><path d="M6.500 0v9l-6.500-4.500z" fill="#a6a6a6"/></svg>
<svg style="left:1760px;top:360px" width="7" height="9" viewBox="0 0 7 9"><path d="M0 0v9l6.500-4.500z" fill="#a6a6a6"/></svg>
<div style="left:17px;top:409px;width:111px;height:14px;background:#f0f0f0"></div>
<span style="left:18px;top:409px;font:12.5px 'DejaVu Sans','Liberation Sans',sans-serif;color:#000;letter-spacing:-0.15px;height:16px;line-height:16px;">RGB Levels</span>
<div style="left:230px;top:407px;width:128px;height:14px;background:#f0f0f0"></div>
<span style="left:241px;top:407px;font:12.5px 'DejaVu Sans','Liberation Sans',sans-serif;color:#000;letter-spacing:0.15px;height:16px;line-height:16px;">Current Measure</span>
<div style="left:14px;top:433px;width:200px;height:86px;background:#f0f0f0"></div>
<div style="left:14px;top:477px;width:200px;height:1px;background:repeating-linear-gradient(90deg,#808080 0 3px,transparent 3px 6px)"></div>
<svg style="left:14px;top:508px" width="200" height="11" viewBox="0 0 200 11"><ellipse cx="25.7" cy="7" rx="22.5" ry="5.8" fill="#a80000" stroke="#000" stroke-width="1"/><ellipse cx="77.0" cy="7" rx="22.5" ry="5.8" fill="#00a800" stroke="#000" stroke-width="1"/><ellipse cx="127.7" cy="7" rx="22.5" ry="5.8" fill="#0000a8" stroke="#000" stroke-width="1"/><ellipse cx="178.39999999999998" cy="7" rx="22.5" ry="5.8" fill="#b8860b" stroke="#000" stroke-width="1"/><rect x="0" y="6" width="200" height="5" fill="#000"/></svg>
<span style="left:9px;top:495px;font:bold 11.6px 'Liberation Serif',serif;color:#000;width:60px;text-align:center;height:15px;line-height:15px;">0.0%</span>
<span style="left:60px;top:495px;font:bold 11.6px 'Liberation Serif',serif;color:#000;width:60px;text-align:center;height:15px;line-height:15px;">0.0%</span>
<span style="left:111px;top:495px;font:bold 11.6px 'Liberation Serif',serif;color:#000;width:60px;text-align:center;height:15px;line-height:15px;">0.0%</span>
<span style="left:163px;top:495px;font:bold 11.6px 'Liberation Serif',serif;color:#000;width:60px;text-align:center;height:15px;line-height:15px;">dE 0.0</span>
<div style="left:16px;top:533px;width:192px;height:74px;background:#f0f0f0"></div>
<span style="left:35px;top:534px;font:bold 13px 'Liberation Sans',sans-serif;color:#000;letter-spacing:0.65px;height:16px;line-height:16px;">Measure</span>
<span style="left:127px;top:534px;font:bold 13px 'Liberation Sans',sans-serif;color:#000;letter-spacing:0.35px;height:16px;line-height:16px;">Reference</span>
<div style="left:17px;top:622px;width:43px;height:15px;background:#f0f0f0"></div>
<span style="left:18px;top:622px;font:12.5px 'DejaVu Sans','Liberation Sans',sans-serif;color:#000;height:16px;line-height:16px;">Target</span>
<div style="left:50px;top:638px;width:116px;height:89px;box-sizing:border-box;border:1px solid #000;background:conic-gradient(from 0deg at 50% 50%,#48ff00 0deg,#b0e000 35deg,#ffb000 52deg,#ff4000 75deg,#ff0000 90deg,#ff0060 115deg,#f000a0 135deg,#a800c0 170deg,#7000d8 195deg,#0000ff 232deg,#0040d0 255deg,#008898 275deg,#00c890 295deg,#00ff70 315deg,#10ff40 340deg,#48ff00 360deg)"></div>
<svg style="left:50px;top:638px" width="116" height="89" viewBox="0 0 116 89"><rect x="17.500" y="13.500" width="81" height="62" rx="7" fill="#000" stroke="#fff" stroke-width="1.200"/><path d="M15 44.500h87M58.500 14v61" stroke="#fff" stroke-width="1" stroke-dasharray="3 2" fill="none"/><ellipse cx="58.500" cy="44" rx="21" ry="15.500" stroke="#fff" stroke-width="1" stroke-dasharray="3 2" fill="none"/></svg>
<div style="left:220px;top:430px;width:153px;height:577px;background:#f0f0f0;box-sizing:border-box;border:1px solid;border-color:#8c8c8c #fff #fff #8c8c8c"></div>
<div style="left:221px;top:431px;width:151px;height:575px;background:#f0f0f0;box-sizing:border-box;border:1px solid;border-color:#6e6e6e #f0f0f0 #f0f0f0 #6e6e6e"></div>
<div style="left:222px;top:432px;width:58px;height:22px;background:#f0f0f0;box-sizing:border-box;border:1px solid;border-color:#fff #f0f0f0 #f0f0f0 #fff"></div>
<div style="left:280px;top:432px;width:1px;height:23px;background:#6e6e6e"></div>
<div style="left:222px;top:454px;width:59px;height:1px;background:#6e6e6e"></div>
<span style="left:222px;top:436px;font:bold 12px 'Liberation Sans',sans-serif;color:#000;width:58px;text-align:center;letter-spacing:-0.3px;height:17px;line-height:17px;">Y cd/m²</span>
<div style="left:281px;top:432px;width:73px;height:22px;background:#fff"></div>
<div style="left:281px;top:454px;width:74px;height:1px;background:#c0c0c0"></div>
<div style="left:354px;top:432px;width:1px;height:23px;background:#c0c0c0"></div>
<div style="left:222px;top:455px;width:58px;height:22px;background:#f0f0f0;box-sizing:border-box;border:1px solid;border-color:#fff #f0f0f0 #f0f0f0 #fff"></div>
<div style="left:280px;top:455px;width:1px;height:23px;background:#6e6e6e"></div>
<div style="left:222px;top:477px;width:59px;height:1px;background:#6e6e6e"></div>
<span style="left:222px;top:459px;font:bold 12px 'Liberation Sans',sans-serif;color:#000;width:58px;text-align:center;letter-spacing:-0.3px;height:17px;line-height:17px;">Y ftL</span>
<div style="left:281px;top:455px;width:73px;height:22px;background:#fff"></div>
<div style="left:281px;top:477px;width:74px;height:1px;background:#c0c0c0"></div>
<div style="left:354px;top:455px;width:1px;height:23px;background:#c0c0c0"></div>
<div style="left:222px;top:478px;width:58px;height:22px;background:#f0f0f0;box-sizing:border-box;border:1px solid;border-color:#fff #f0f0f0 #f0f0f0 #fff"></div>
<div style="left:280px;top:478px;width:1px;height:23px;background:#6e6e6e"></div>
<div style="left:222px;top:500px;width:59px;height:1px;background:#6e6e6e"></div>
<span style="left:222px;top:482px;font:bold 12px 'Liberation Sans',sans-serif;color:#000;width:58px;text-align:center;letter-spacing:-0.3px;height:17px;line-height:17px;">T°</span>
<div style="left:281px;top:478px;width:73px;height:22px;background:#fff"></div>
<div style="left:281px;top:500px;width:74px;height:1px;background:#c0c0c0"></div>
<div style="left:354px;top:478px;width:1px;height:23px;background:#c0c0c0"></div>
<div style="left:222px;top:501px;width:58px;height:22px;background:#f0f0f0;box-sizing:border-box;border:1px solid;border-color:#fff #f0f0f0 #f0f0f0 #fff"></div>
<div style="left:280px;top:501px;width:1px;height:23px;background:#6e6e6e"></div>
<div style="left:222px;top:523px;width:59px;height:1px;background:#6e6e6e"></div>
<span style="left:222px;top:505px;font:bold 12px 'Liberation Sans',sans-serif;color:#000;width:58px;text-align:center;letter-spacing:-0.3px;height:17px;line-height:17px;">X</span>
<div style="left:281px;top:501px;width:73px;height:22px;background:#e0e0e0"></div>
<div style="left:281px;top:523px;width:74px;height:1px;background:#c0c0c0"></div>
<div style="left:354px;top:501px;width:1px;height:23px;background:#c0c0c0"></div>
<div style="left:222px;top:524px;width:58px;height:22px;background:#f0f0f0;box-sizing:border-box;border:1px solid;border-color:#fff #f0f0f0 #f0f0f0 #fff"></div>
<div style="left:280px;top:524px;width:1px;height:23px;background:#6e6e6e"></div>
<div style="left:222px;top:546px;width:59px;height:1px;background:#6e6e6e"></div>
<span style="left:222px;top:528px;font:bold 12px 'Liberation Sans',sans-serif;color:#000;width:58px;text-align:center;letter-spacing:-0.3px;height:17px;line-height:17px;">Y</span>
<div style="left:281px;top:524px;width:73px;height:22px;background:#e0e0e0"></div>
<div style="left:281px;top:546px;width:74px;height:1px;background:#c0c0c0"></div>
<div style="left:354px;top:524px;width:1px;height:23px;background:#c0c0c0"></div>
<div style="left:222px;top:547px;width:58px;height:22px;background:#f0f0f0;box-sizing:border-box;border:1px solid;border-color:#fff #f0f0f0 #f0f0f0 #fff"></div>
<div style="left:280px;top:547px;width:1px;height:23px;background:#6e6e6e"></div>
<div style="left:222px;top:569px;width:59px;height:1px;background:#6e6e6e"></div>
<span style="left:222px;top:551px;font:bold 12px 'Liberation Sans',sans-serif;color:#000;width:58px;text-align:center;letter-spacing:-0.3px;height:17px;line-height:17px;">Z</span>
<div style="left:281px;top:547px;width:73px;height:22px;background:#e0e0e0"></div>
<div style="left:281px;top:569px;width:74px;height:1px;background:#c0c0c0"></div>
<div style="left:354px;top:547px;width:1px;height:23px;background:#c0c0c0"></div>
<div style="left:222px;top:570px;width:58px;height:22px;background:#f0f0f0;box-sizing:border-box;border:1px solid;border-color:#fff #f0f0f0 #f0f0f0 #fff"></div>
<div style="left:280px;top:570px;width:1px;height:23px;background:#6e6e6e"></div>
<div style="left:222px;top:592px;width:59px;height:1px;background:#6e6e6e"></div>
<span style="left:222px;top:574px;font:bold 12px 'Liberation Sans',sans-serif;color:#000;width:58px;text-align:center;letter-spacing:-0.3px;height:17px;line-height:17px;">R</span>
<div style="left:281px;top:570px;width:73px;height:22px;background:#fff"></div>
<div style="left:281px;top:592px;width:74px;height:1px;background:#c0c0c0"></div>
<div style="left:354px;top:570px;width:1px;height:23px;background:#c0c0c0"></div>
<div style="left:222px;top:593px;width:58px;height:22px;background:#f0f0f0;box-sizing:border-box;border:1px solid;border-color:#fff #f0f0f0 #f0f0f0 #fff"></div>
<div style="left:280px;top:593px;width:1px;height:23px;background:#6e6e6e"></div>
<div style="left:222px;top:615px;width:59px;height:1px;background:#6e6e6e"></div>
<span style="left:222px;top:597px;font:bold 12px 'Liberation Sans',sans-serif;color:#000;width:58px;text-align:center;letter-spacing:-0.3px;height:17px;line-height:17px;">G</span>
<div style="left:281px;top:593px;width:73px;height:22px;background:#fff"></div>
<div style="left:281px;top:615px;width:74px;height:1px;background:#c0c0c0"></div>
<div style="left:354px;top:593px;width:1px;height:23px;background:#c0c0c0"></div>
<div style="left:222px;top:616px;width:58px;height:22px;background:#f0f0f0;box-sizing:border-box;border:1px solid;border-color:#fff #f0f0f0 #f0f0f0 #fff"></div>
<div style="left:280px;top:616px;width:1px;height:23px;background:#6e6e6e"></div>
<div style="left:222px;top:638px;width:59px;height:1px;background:#6e6e6e"></div>
<span style="left:222px;top:620px;font:bold 12px 'Liberation Sans',sans-serif;color:#000;width:58px;text-align:center;letter-spacing:-0.3px;height:17px;line-height:17px;">B</span>
<div style="left:281px;top:616px;width:73px;height:22px;background:#fff"></div>
<div style="left:281px;top:638px;width:74px;height:1px;background:#c0c0c0"></div>
<div style="left:354px;top:616px;width:1px;height:23px;background:#c0c0c0"></div>
<div style="left:222px;top:639px;width:58px;height:22px;background:#f0f0f0;box-sizing:border-box;border:1px solid;border-color:#fff #f0f0f0 #f0f0f0 #fff"></div>
<div style="left:280px;top:639px;width:1px;height:23px;background:#6e6e6e"></div>
<div style="left:222px;top:661px;width:59px;height:1px;background:#6e6e6e"></div>
<span style="left:222px;top:643px;font:bold 12px 'Liberation Sans',sans-serif;color:#000;width:58px;text-align:center;letter-spacing:-0.3px;height:17px;line-height:17px;">x</span>
<div style="left:281px;top:639px;width:73px;height:22px;background:#e0e0e0"></div>
<div style="left:281px;top:661px;width:74px;height:1px;background:#c0c0c0"></div>
<div style="left:354px;top:639px;width:1px;height:23px;background:#c0c0c0"></div>
<div style="left:222px;top:662px;width:58px;height:22px;background:#f0f0f0;box-sizing:border-box;border:1px solid;border-color:#fff #f0f0f0 #f0f0f0 #fff"></div>
<div style="left:280px;top:662px;width:1px;height:23px;background:#6e6e6e"></div>
<div style="left:222px;top:684px;width:59px;height:1px;background:#6e6e6e"></div>
<span style="left:222px;top:666px;font:bold 12px 'Liberation Sans',sans-serif;color:#000;width:58px;text-align:center;letter-spacing:-0.3px;height:17px;line-height:17px;">y</span>
<div style="left:281px;top:662px;width:73px;height:22px;background:#e0e0e0"></div>
<div style="left:281px;top:684px;width:74px;height:1px;background:#c0c0c0"></div>
<div style="left:354px;top:662px;width:1px;height:23px;background:#c0c0c0"></div>
<div style="left:222px;top:685px;width:58px;height:22px;background:#f0f0f0;box-sizing:border-box;border:1px solid;border-color:#fff #f0f0f0 #f0f0f0 #fff"></div>
<div style="left:280px;top:685px;width:1px;height:23px;background:#6e6e6e"></div>
<div style="left:222px;top:707px;width:59px;height:1px;background:#6e6e6e"></div>
<span style="left:222px;top:689px;font:bold 12px 'Liberation Sans',sans-serif;color:#000;width:58px;text-align:center;letter-spacing:-0.3px;height:17px;line-height:17px;">Y</span>
<div style="left:281px;top:685px;width:73px;height:22px;background:#e0e0e0"></div>
<div style="left:281px;top:707px;width:74px;height:1px;background:#c0c0c0"></div>
<div style="left:354px;top:685px;width:1px;height:23px;background:#c0c0c0"></div>
<div style="left:222px;top:708px;width:58px;height:22px;background:#f0f0f0;box-sizing:border-box;border:1px solid;border-color:#fff #f0f0f0 #f0f0f0 #fff"></div>
<div style="left:280px;top:708px;width:1px;height:23px;background:#6e6e6e"></div>
<div style="left:222px;top:730px;width:59px;height:1px;background:#6e6e6e"></div>
<span style="left:222px;top:712px;font:bold 12px 'Liberation Sans',sans-serif;color:#000;width:58px;text-align:center;letter-spacing:-0.3px;height:17px;line-height:17px;">x</span>
<div style="left:281px;top:708px;width:73px;height:22px;background:#fff"></div>
<div style="left:281px;top:730px;width:74px;height:1px;background:#c0c0c0"></div>
<div style="left:354px;top:708px;width:1px;height:23px;background:#c0c0c0"></div>
<div style="left:222px;top:731px;width:58px;height:22px;background:#f0f0f0;box-sizing:border-box;border:1px solid;border-color:#fff #f0f0f0 #f0f0f0 #fff"></div>
<div style="left:280px;top:731px;width:1px;height:23px;background:#6e6e6e"></div>
<div style="left:222px;top:753px;width:59px;height:1px;background:#6e6e6e"></div>
<span style="left:222px;top:735px;font:bold 12px 'Liberation Sans',sans-serif;color:#000;width:58px;text-align:center;letter-spacing:-0.3px;height:17px;line-height:17px;">y</span>
<div style="left:281px;top:731px;width:73px;height:22px;background:#fff"></div>
<div style="left:281px;top:753px;width:74px;height:1px;background:#c0c0c0"></div>
<div style="left:354px;top:731px;width:1px;height:23px;background:#c0c0c0"></div>
<div style="left:222px;top:754px;width:58px;height:22px;background:#f0f0f0;box-sizing:border-box;border:1px solid;border-color:#fff #f0f0f0 #f0f0f0 #fff"></div>
<div style="left:280px;top:754px;width:1px;height:23px;background:#6e6e6e"></div>
<div style="left:222px;top:776px;width:59px;height:1px;background:#6e6e6e"></div>
<span style="left:222px;top:758px;font:bold 12px 'Liberation Sans',sans-serif;color:#000;width:58px;text-align:center;letter-spacing:-0.3px;height:17px;line-height:17px;">z</span>
<div style="left:281px;top:754px;width:73px;height:22px;background:#fff"></div>
<div style="left:281px;top:776px;width:74px;height:1px;background:#c0c0c0"></div>
<div style="left:354px;top:754px;width:1px;height:23px;background:#c0c0c0"></div>
<div style="left:222px;top:777px;width:58px;height:22px;background:#f0f0f0;box-sizing:border-box;border:1px solid;border-color:#fff #f0f0f0 #f0f0f0 #fff"></div>
<div style="left:280px;top:777px;width:1px;height:23px;background:#6e6e6e"></div>
<div style="left:222px;top:799px;width:59px;height:1px;background:#6e6e6e"></div>
<span style="left:222px;top:781px;font:bold 12px 'Liberation Sans',sans-serif;color:#000;width:58px;text-align:center;letter-spacing:-0.3px;height:17px;line-height:17px;">L</span>
<div style="left:281px;top:777px;width:73px;height:22px;background:#e0e0e0"></div>
<div style="left:281px;top:799px;width:74px;height:1px;background:#c0c0c0"></div>
<div style="left:354px;top:777px;width:1px;height:23px;background:#c0c0c0"></div>
<div style="left:222px;top:800px;width:58px;height:22px;background:#f0f0f0;box-sizing:border-box;border:1px solid;border-color:#fff #f0f0f0 #f0f0f0 #fff"></div>
<div style="left:280px;top:800px;width:1px;height:23px;background:#6e6e6e"></div>
<div style="left:222px;top:822px;width:59px;height:1px;background:#6e6e6e"></div>
<span style="left:222px;top:804px;font:bold 12px 'Liberation Sans',sans-serif;color:#000;width:58px;text-align:center;letter-spacing:-0.3px;height:17px;line-height:17px;">a</span>
<div style="left:281px;top:800px;width:73px;height:22px;background:#e0e0e0"></div>
<div style="left:281px;top:822px;width:74px;height:1px;background:#c0c0c0"></div>
<div style="left:354px;top:800px;width:1px;height:23px;background:#c0c0c0"></div>
<div style="left:222px;top:823px;width:58px;height:22px;background:#f0f0f0;box-sizing:border-box;border:1px solid;border-color:#fff #f0f0f0 #f0f0f0 #fff"></div>
<div style="left:280px;top:823px;width:1px;height:23px;background:#6e6e6e"></div>
<div style="left:222px;top:845px;width:59px;height:1px;background:#6e6e6e"></div>
<span style="left:222px;top:827px;font:bold 12px 'Liberation Sans',sans-serif;color:#000;width:58px;text-align:center;letter-spacing:-0.3px;height:17px;line-height:17px;">b</span>
<div style="left:281px;top:823px;width:73px;height:22px;background:#e0e0e0"></div>
<div style="left:281px;top:845px;width:74px;height:1px;background:#c0c0c0"></div>
<div style="left:354px;top:823px;width:1px;height:23px;background:#c0c0c0"></div>
<div style="left:222px;top:846px;width:58px;height:22px;background:#f0f0f0;box-sizing:border-box;border:1px solid;border-color:#fff #f0f0f0 #f0f0f0 #fff"></div>
<div style="left:280px;top:846px;width:1px;height:23px;background:#6e6e6e"></div>
<div style="left:222px;top:868px;width:59px;height:1px;background:#6e6e6e"></div>
<span style="left:222px;top:850px;font:bold 12px 'Liberation Sans',sans-serif;color:#000;width:58px;text-align:center;letter-spacing:-0.3px;height:17px;line-height:17px;">L</span>
<div style="left:281px;top:846px;width:73px;height:22px;background:#fff"></div>
<div style="left:281px;top:868px;width:74px;height:1px;background:#c0c0c0"></div>
<div style="left:354px;top:846px;width:1px;height:23px;background:#c0c0c0"></div>
<div style="left:222px;top:869px;width:58px;height:22px;background:#f0f0f0;box-sizing:border-box;border:1px solid;border-color:#fff #f0f0f0 #f0f0f0 #fff"></div>
<div style="left:280px;top:869px;width:1px;height:23px;background:#6e6e6e"></div>
<div style="left:222px;top:891px;width:59px;height:1px;background:#6e6e6e"></div>
<span style="left:222px;top:873px;font:bold 12px 'Liberation Sans',sans-serif;color:#000;width:58px;text-align:center;letter-spacing:-0.3px;height:17px;line-height:17px;">C</span>
<div style="left:281px;top:869px;width:73px;height:22px;background:#fff"></div>
<div style="left:281px;top:891px;width:74px;height:1px;background:#c0c0c0"></div>
<div style="left:354px;top:869px;width:1px;height:23px;background:#c0c0c0"></div>
<div style="left:222px;top:892px;width:58px;height:22px;background:#f0f0f0;box-sizing:border-box;border:1px solid;border-color:#fff #f0f0f0 #f0f0f0 #fff"></div>
<div style="left:280px;top:892px;width:1px;height:23px;background:#6e6e6e"></div>
<div style="left:222px;top:914px;width:59px;height:1px;background:#6e6e6e"></div>
<span style="left:222px;top:896px;font:bold 12px 'Liberation Sans',sans-serif;color:#000;width:58px;text-align:center;letter-spacing:-0.3px;height:17px;line-height:17px;">H</span>
<div style="left:281px;top:892px;width:73px;height:22px;background:#fff"></div>
<div style="left:281px;top:914px;width:74px;height:1px;background:#c0c0c0"></div>
<div style="left:354px;top:892px;width:1px;height:23px;background:#c0c0c0"></div>
<div style="left:222px;top:915px;width:58px;height:22px;background:#f0f0f0;box-sizing:border-box;border:1px solid;border-color:#fff #f0f0f0 #f0f0f0 #fff"></div>
<div style="left:280px;top:915px;width:1px;height:23px;background:#6e6e6e"></div>
<div style="left:222px;top:937px;width:59px;height:1px;background:#6e6e6e"></div>
<span style="left:222px;top:919px;font:bold 12px 'Liberation Sans',sans-serif;color:#000;width:58px;text-align:center;letter-spacing:-0.3px;height:17px;line-height:17px;">L</span>
<div style="left:281px;top:915px;width:73px;height:22px;background:#e0e0e0"></div>
<div style="left:281px;top:937px;width:74px;height:1px;background:#c0c0c0"></div>
<div style="left:354px;top:915px;width:1px;height:23px;background:#c0c0c0"></div>
<div style="left:222px;top:938px;width:58px;height:22px;background:#f0f0f0;box-sizing:border-box;border:1px solid;border-color:#fff #f0f0f0 #f0f0f0 #fff"></div>
<div style="left:280px;top:938px;width:1px;height:23px;background:#6e6e6e"></div>
<div style="left:222px;top:960px;width:59px;height:1px;background:#6e6e6e"></div>
<span style="left:222px;top:942px;font:bold 12px 'Liberation Sans',sans-serif;color:#000;width:58px;text-align:center;letter-spacing:-0.3px;height:17px;line-height:17px;">M</span>
<div style="left:281px;top:938px;width:73px;height:22px;background:#e0e0e0"></div>
<div style="left:281px;top:960px;width:74px;height:1px;background:#c0c0c0"></div>
<div style="left:354px;top:938px;width:1px;height:23px;background:#c0c0c0"></div>
<div style="left:222px;top:961px;width:58px;height:22px;background:#f0f0f0;box-sizing:border-box;border:1px solid;border-color:#fff #f0f0f0 #f0f0f0 #fff"></div>
<div style="left:280px;top:961px;width:1px;height:23px;background:#6e6e6e"></div>
<div style="left:222px;top:983px;width:59px;height:1px;background:#6e6e6e"></div>
<span style="left:222px;top:965px;font:bold 12px 'Liberation Sans',sans-serif;color:#000;width:58px;text-align:center;letter-spacing:-0.3px;height:17px;line-height:17px;">S</span>
<div style="left:281px;top:961px;width:73px;height:22px;background:#e0e0e0"></div>
<div style="left:281px;top:983px;width:74px;height:1px;background:#c0c0c0"></div>
<div style="left:354px;top:961px;width:1px;height:23px;background:#c0c0c0"></div>
<div style="left:222px;top:984px;width:133px;height:22px;background:#a0a0a0"></div>
<div style="left:355px;top:432px;width:17px;height:574px;background:#f0f0f0"></div>
<svg style="left:360px;top:437px" width="8" height="7" viewBox="0 0 8 7"><path d="M0 6.500h8l-4-6.500z" fill="#a6a6a6"/></svg>
<svg style="left:360px;top:996px" width="8" height="7" viewBox="0 0 8 7"><path d="M0 0h8l-4 6.500z" fill="#a6a6a6"/></svg>
<div style="left:396px;top:409px;width:302px;height:22px;background:#fff;box-sizing:border-box;border:1px solid;border-color:#828282 #fff #fff #828282"></div>
<div style="left:397px;top:410px;width:300px;height:20px;background:#fff;box-sizing:border-box;border:1px solid;border-color:#696969 #e3e3e3 #e3e3e3 #696969"></div>
<div style="left:400px;top:413px;width:280px;height:16px;background:#0078d7"></div>
<span style="left:401px;top:413px;font:12.5px 'DejaVu Sans','Liberation Sans',sans-serif;color:#fff;height:17px;line-height:17px;">RGB Levels</span>
<div style="left:680px;top:412px;width:17px;height:17px;background:#f0f0f0;box-sizing:border-box;border:1px solid;border-color:#e3e3e3 #696969 #696969 #e3e3e3"></div>
<div style="left:681px;top:413px;width:15px;height:15px;background:#f0f0f0;box-sizing:border-box;border:1px solid;border-color:#fff #a0a0a0 #a0a0a0 #fff"></div>
<svg style="left:684px;top:418px" width="9" height="5" viewBox="0 0 9 5"><path d="M0.500 0h8l-4 4.500z" fill="#000"/></svg>
<div style="left:398px;top:439px;width:1496px;height:570px;background:#fff;box-sizing:border-box;border:2px solid;border-color:#9a9a9a #fff #fff #9a9a9a"></div>
<div style="left:400px;top:441px;width:1492px;height:566px;box-sizing:border-box;border:2px solid;border-color:#6a6a6a #e3e3e3 #e3e3e3 #6a6a6a"></div>
<svg style="left:402px;top:443px" width="1489" height="562" viewBox="0 0 1489 562"><defs><linearGradient id="cg" x1="0" y1="0" x2="1" y2="0"><stop offset="0" stop-color="#202020"/><stop offset="1" stop-color="#ffffff"/></linearGradient></defs><rect x="0" y="0" width="1489" height="562" fill="url(#cg)"/><path d="M0.5 0V562M148.5 0V562M297.5 0V562M446.5 0V562M595.5 0V562M744.5 0V562M892.5 0V562M1041.5 0V562M1190.5 0V562M1339.5 0V562M0 28.5H1489M0 56.5H1489M0 84.5H1489M0 112.5H1489M0 140.5H1489M0 168.5H1489M0 196.5H1489M0 224.5H1489M0 252.5H1489M0 337.5H1489M0 393.5H1489M0 449.5H1489M0 505.5H1489" stroke="#024040" stroke-width="1" fill="none" shape-rendering="crispEdges"/><path d="M0 140.5H1489" stroke="#fff" stroke-width="1" stroke-dasharray="3 3" fill="none" shape-rendering="crispEdges"/><rect x="0" y="136" width="5" height="9" fill="#1c1c1c"/><rect x="0" y="136" width="4" height="8" fill="#ebebeb"/><text x="3" y="24" fill="#e2e2e2" font-family="'Liberation Serif',serif" font-size="14">140%</text><text x="3" y="52" fill="#e2e2e2" font-family="'Liberation Serif',serif" font-size="14">130%</text><text x="3" y="80" fill="#e2e2e2" font-family="'Liberation Serif',serif" font-size="14">120%</text><text x="3" y="108" fill="#e2e2e2" font-family="'Liberation Serif',serif" font-size="14">110%</text><text x="3" y="136" fill="#e2e2e2" font-family="'Liberation Serif',serif" font-size="14">100%</text><text x="3" y="164" fill="#e2e2e2" font-family="'Liberation Serif',serif" font-size="14">90%</text><text x="3" y="192" fill="#e2e2e2" font-family="'Liberation Serif',serif" font-size="14">80%</text><text x="3" y="220" fill="#e2e2e2" font-family="'Liberation Serif',serif" font-size="14">70%</text><text x="3" y="248" fill="#e2e2e2" font-family="'Liberation Serif',serif" font-size="14">60%</text><text x="3" y="333" fill="#e2e2e2" font-family="'Liberation Serif',serif" font-size="14">8</text><text x="3" y="389" fill="#e2e2e2" font-family="'Liberation Serif',serif" font-size="14">6</text><text x="3" y="445" fill="#e2e2e2" font-family="'Liberation Serif',serif" font-size="14">4</text><text x="3" y="501" fill="#e2e2e2" font-family="'Liberation Serif',serif" font-size="14">2</text><text x="150" y="277" fill="#e6e6e6" font-family="'Liberation Serif',serif" font-size="14" textLength="62" lengthAdjust="spacingAndGlyphs">10% White</text><text x="299" y="277" fill="#d2d2d2" font-family="'Liberation Serif',serif" font-size="14" textLength="62" lengthAdjust="spacingAndGlyphs">20% White</text><text x="448" y="277" fill="#bebebe" font-family="'Liberation Serif',serif" font-size="14" textLength="62" lengthAdjust="spacingAndGlyphs">30% White</text><text x="597" y="277" fill="#a6a6a6" font-family="'Liberation Serif',serif" font-size="14" textLength="62" lengthAdjust="spacingAndGlyphs">40% White</text><text x="746" y="277" fill="#a3a3a3" font-family="'Liberation Serif',serif" font-size="14" textLength="62" lengthAdjust="spacingAndGlyphs">50% White</text><text x="894" y="277" fill="#6a6a6a" font-family="'Liberation Serif',serif" font-size="14" textLength="62" lengthAdjust="spacingAndGlyphs">60% White</text><text x="1043" y="277" fill="#505050" font-family="'Liberation Serif',serif" font-size="14" textLength="62" lengthAdjust="spacingAndGlyphs">70% White</text><text x="1192" y="277" fill="#363636" font-family="'Liberation Serif',serif" font-size="14" textLength="62" lengthAdjust="spacingAndGlyphs">80% White</text><text x="1341" y="277" fill="#1c1c1c" font-family="'Liberation Serif',serif" font-size="14" textLength="62" lengthAdjust="spacingAndGlyphs">90% White</text><text x="150" y="558" fill="#e6e6e6" font-family="'Liberation Serif',serif" font-size="14" textLength="62" lengthAdjust="spacingAndGlyphs">10% White</text><text x="299" y="558" fill="#d2d2d2" font-family="'Liberation Serif',serif" font-size="14" textLength="62" lengthAdjust="spacingAndGlyphs">20% White</text><text x="448" y="558" fill="#bebebe" font-family="'Liberation Serif',serif" font-size="14" textLength="62" lengthAdjust="spacingAndGlyphs">30% White</text><text x="597" y="558" fill="#a6a6a6" font-family="'Liberation Serif',serif" font-size="14" textLength="62" lengthAdjust="spacingAndGlyphs">40% White</text><text x="746" y="558" fill="#a3a3a3" font-family="'Liberation Serif',serif" font-size="14" textLength="62" lengthAdjust="spacingAndGlyphs">50% White</text><text x="894" y="558" fill="#6a6a6a" font-family="'Liberation Serif',serif" font-size="14" textLength="62" lengthAdjust="spacingAndGlyphs">60% White</text><text x="1043" y="558" fill="#505050" font-family="'Liberation Serif',serif" font-size="14" textLength="62" lengthAdjust="spacingAndGlyphs">70% White</text><text x="1192" y="558" fill="#363636" font-family="'Liberation Serif',serif" font-size="14" textLength="62" lengthAdjust="spacingAndGlyphs">80% White</text><text x="1341" y="558" fill="#1c1c1c" font-family="'Liberation Serif',serif" font-size="14" textLength="62" lengthAdjust="spacingAndGlyphs">90% White</text><text x="653" y="14" fill="#dcdc00" font-family="'Liberation Sans',sans-serif" font-weight="bold" font-size="14.5">Gray Scale Balance w/gamma</text><text x="1323" y="519.5" fill="#9a9a9a" font-family="'Liberation Sans',sans-serif" font-weight="bold" font-size="16">hcfr.sourceforge.net</text><svg x="0" y="0" width="1488" height="562" overflow="hidden"><polyline points="67.5,141.0 142.5,135.0 217.5,145.0 291.5,136.0 366.5,131.0 441.5,133.0 516.5,134.0 591.5,141.0 665.5,135.0 740.5,135.0 815.5,145.0 890.5,142.0 964.5,150.0 1039.5,143.0 1114.5,148.0 1189.5,150.0 1264.5,150.0 1338.5,145.0 1413.5,138.0 1488.5,141.0" stroke="#ff0000" stroke-width="2" fill="none" shape-rendering="crispEdges"/><rect x="63" y="136" width="8" height="8" fill="#ff0000"/><rect x="138" y="130" width="8" height="8" fill="#ff0000"/><rect x="213" y="140" width="8" height="8" fill="#ff0000"/><rect x="287" y="131" width="8" height="8" fill="#ff0000"/><rect x="362" y="126" width="8" height="8" fill="#ff0000"/><rect x="437" y="128" width="8" height="8" fill="#ff0000"/><rect x="512" y="129" width="8" height="8" fill="#ff0000"/><rect x="587" y="136" width="8" height="8" fill="#ff0000"/><rect x="661" y="130" width="8" height="8" fill="#ff0000"/><rect x="736" y="130" width="8" height="8" fill="#ff0000"/><rect x="811" y="140" width="8" height="8" fill="#ff0000"/><rect x="886" y="137" width="8" height="8" fill="#ff0000"/><rect x="960" y="145" width="8" height="8" fill="#ff0000"/><rect x="1035" y="138" width="8" height="8" fill="#ff0000"/><rect x="1110" y="143" width="8" height="8" fill="#ff0000"/><rect x="1185" y="145" width="8" height="8" fill="#ff0000"/><rect x="1260" y="145" width="8" height="8" fill="#ff0000"/><rect x="1334" y="140" width="8" height="8" fill="#ff0000"/><rect x="1409" y="133" width="8" height="8" fill="#ff0000"/><rect x="1484" y="136" width="8" height="8" fill="#ff0000"/><polyline points="67.5,172.0 142.5,140.0 217.5,141.0 291.5,124.0 366.5,137.0 441.5,145.0 516.5,146.0 591.5,137.0 665.5,139.0 740.5,136.0 815.5,136.0 890.5,136.0 964.5,141.0 1039.5,139.0 1114.5,140.0 1189.5,141.0 1264.5,143.0 1338.5,142.0 1413.5,142.0 1488.5,141.0" stroke="#00ff00" stroke-width="2" fill="none" shape-rendering="crispEdges"/><rect x="63" y="167" width="8" height="8" fill="#00ff00"/><rect x="138" y="135" width="8" height="8" fill="#00ff00"/><rect x="213" y="136" width="8" height="8" fill="#00ff00"/><rect x="287" y="119" width="8" height="8" fill="#00ff00"/><rect x="362" y="132" width="8" height="8" fill="#00ff00"/><rect x="437" y="140" width="8" height="8" fill="#00ff00"/><rect x="512" y="141" width="8" height="8" fill="#00ff00"/><rect x="587" y="132" width="8" height="8" fill="#00ff00"/><rect x="661" y="134" width="8" height="8" fill="#00ff00"/><rect x="736" y="131" width="8" height="8" fill="#00ff00"/><rect x="811" y="131" width="8" height="8" fill="#00ff00"/><rect x="886" y="131" width="8" height="8" fill="#00ff00"/><rect x="960" y="136" width="8" height="8" fill="#00ff00"/><rect x="1035" y="134" width="8" height="8" fill="#00ff00"/><rect x="1110" y="135" width="8" height="8" fill="#00ff00"/><rect x="1185" y="136" width="8" height="8" fill="#00ff00"/><rect x="1260" y="138" width="8" height="8" fill="#00ff00"/><rect x="1334" y="137" width="8" height="8" fill="#00ff00"/><rect x="1409" y="137" width="8" height="8" fill="#00ff00"/><rect x="1484" y="136" width="8" height="8" fill="#00ff00"/><polyline points="67.5,243.0 142.5,137.0 217.5,131.0 291.5,116.0 366.5,145.0 441.5,145.0 516.5,158.0 591.5,145.0 665.5,141.0 740.5,138.0 815.5,143.0 890.5,143.0 964.5,145.0 1039.5,138.0 1114.5,138.0 1189.5,133.0 1264.5,139.0 1338.5,136.0 1413.5,136.0 1488.5,141.0" stroke="#0000ff" stroke-width="2" fill="none" shape-rendering="crispEdges"/><rect x="63" y="238" width="8" height="8" fill="#0000ff"/><rect x="138" y="132" width="8" height="8" fill="#0000ff"/><rect x="213" y="126" width="8" height="8" fill="#0000ff"/><rect x="287" y="111" width="8" height="8" fill="#0000ff"/><rect x="362" y="140" width="8" height="8" fill="#0000ff"/><rect x="437" y="140" width="8" height="8" fill="#0000ff"/><rect x="512" y="153" width="8" height="8" fill="#0000ff"/><rect x="587" y="140" width="8" height="8" fill="#0000ff"/><rect x="661" y="136" width="8" height="8" fill="#0000ff"/><rect x="736" y="133" width="8" height="8" fill="#0000ff"/><rect x="811" y="138" width="8" height="8" fill="#0000ff"/><rect x="886" y="138" width="8" height="8" fill="#0000ff"/><rect x="960" y="140" width="8" height="8" fill="#0000ff"/><rect x="1035" y="133" width="8" height="8" fill="#0000ff"/><rect x="1110" y="133" width="8" height="8" fill="#0000ff"/><rect x="1185" y="128" width="8" height="8" fill="#0000ff"/><rect x="1260" y="134" width="8" height="8" fill="#0000ff"/><rect x="1334" y="131" width="8" height="8" fill="#0000ff"/><rect x="1409" y="131" width="8" height="8" fill="#0000ff"/><rect x="1484" y="136" width="8" height="8" fill="#0000ff"/><polyline points="67.5,557.0 142.5,559.0 217.5,549.0 291.5,541.0 366.5,546.0 441.5,535.0 516.5,526.0 591.5,534.0 665.5,548.0 740.5,552.0 815.5,522.0 890.5,526.0 964.5,518.0 1039.5,542.0 1114.5,516.0 1189.5,514.0 1264.5,522.0 1338.5,533.0 1413.5,527.0 1488.5,558.0" stroke="#ff00ff" stroke-width="2" fill="none" shape-rendering="crispEdges"/><rect x="63" y="552" width="8" height="8" fill="#ff00ff"/><rect x="138" y="554" width="8" height="8" fill="#ff00ff"/><rect x="213" y="544" width="8" height="8" fill="#ff00ff"/><rect x="287" y="536" width="8" height="8" fill="#ff00ff"/><rect x="362" y="541" width="8" height="8" fill="#ff00ff"/><rect x="437" y="530" width="8" height="8" fill="#ff00ff"/><rect x="512" y="521" width="8" height="8" fill="#ff00ff"/><rect x="587" y="529" width="8" height="8" fill="#ff00ff"/><rect x="661" y="543" width="8" height="8" fill="#ff00ff"/><rect x="736" y="547" width="8" height="8" fill="#ff00ff"/><rect x="811" y="517" width="8" height="8" fill="#ff00ff"/><rect x="886" y="521" width="8" height="8" fill="#ff00ff"/><rect x="960" y="513" width="8" height="8" fill="#ff00ff"/><rect x="1035" y="537" width="8" height="8" fill="#ff00ff"/><rect x="1110" y="511" width="8" height="8" fill="#ff00ff"/><rect x="1185" y="509" width="8" height="8" fill="#ff00ff"/><rect x="1260" y="517" width="8" height="8" fill="#ff00ff"/><rect x="1334" y="528" width="8" height="8" fill="#ff00ff"/><rect x="1409" y="522" width="8" height="8" fill="#ff00ff"/><rect x="1484" y="553" width="8" height="8" fill="#ff00ff"/></svg></svg>
<div style="left:1890px;top:443px;width:1px;height:562px;background:#fbfbfb"></div>
<div style="left:19px;top:1030px;width:1825px;height:2px;background:#808080"></div>
<div style="left:0px;top:1041px;width:1920px;height:1px;background:#9a9a9a"></div>
<div style="left:0px;top:1042px;width:1920px;height:1px;background:#000"></div>
<div style="left:0px;top:1043px;width:1920px;height:18px;background:#f0f0f0"></div>
<div style="left:0px;top:1043px;width:54px;height:18px;background:#000"></div>
<div style="left:1px;top:1044px;width:17px;height:16px;background:#f0f0f0;box-sizing:border-box;border:1px solid;border-color:#fff #a0a0a0 #a0a0a0 #fff"></div>
<div style="left:19px;top:1044px;width:17px;height:16px;background:#f0f0f0;box-sizing:border-box;border:1px solid;border-color:#fff #a0a0a0 #a0a0a0 #fff"></div>
<div style="left:36px;top:1044px;width:17px;height:16px;background:#f0f0f0;box-sizing:border-box;border:1px solid;border-color:#fff #a0a0a0 #a0a0a0 #fff"></div>
<svg style="left:5px;top:1047px" width="9" height="9" viewBox="0 0 9 9"><path d="M0.500 0.500l8 8M8.500 0.500l-8 8" stroke="#000" stroke-width="1.200" fill="none"/></svg>
<svg style="left:24px;top:1048px" width="5" height="8" viewBox="0 0 5 8"><path d="M4.500 0v8l-4-4z" fill="#000"/></svg>
<svg style="left:42px;top:1048px" width="5" height="8" viewBox="0 0 5 8"><path d="M0.500 0v8l4-4z" fill="#000"/></svg>
<svg style="left:54px;top:1042px" width="210" height="19" viewBox="0 0 210 19"><path d="M1 1.500L8 18.500H66L74 1.500" fill="#fff" stroke="#000" stroke-width="1"/><path d="M74 1.500L70.500 9l4.500 9.500H139.500L143.500 10" fill="#f0f0f0" stroke="#000" stroke-width="1"/><path d="M139.500 1.500L148 18.500H191.500L199.500 1.500" fill="#f0f0f0" stroke="#000" stroke-width="1"/><path d="M1 1h73" stroke="#fff" stroke-width="1.500"/></svg>
<span style="left:66.5px;top:1045px;font:bold 10px 'DejaVu Sans','Liberation Sans',sans-serif;color:#000;letter-spacing:-0.75px;height:13px;line-height:13px;">Measures</span>
<span style="left:135px;top:1045px;font:9.5px 'DejaVu Sans','Liberation Sans',sans-serif;color:#222;letter-spacing:-0.45px;height:13px;line-height:13px;">RGB Levels</span>
<span style="left:206px;top:1045px;font:9.5px 'DejaVu Sans','Liberation Sans',sans-serif;color:#222;letter-spacing:-0.8px;height:13px;line-height:13px;">Gamma</span>
<svg style="left:1750px;top:1044px" width="16" height="15" viewBox="0 0 16 15"><path d="M1 0.500h13.500v9l-1 4h-4l-1-3h-1.500l-1 3.500h-3.500l-1.500-4z" fill="#808000" stroke="#000" stroke-width="1"/><rect x="2.500" y="2" width="7.500" height="5" fill="#e81010"/><path d="M3.500 4.500c2-2 4-2 5.500 0M7.500 3l1.500 1.500-2 1" stroke="#fff" stroke-width="1" fill="none"/><rect x="9" y="8.500" width="4" height="4" fill="#f8f000"/></svg>
<div style="left:1846px;top:1044px;width:13px;height:13px;background:#fff;box-sizing:border-box;border:1px solid;border-color:#828282 #fff #fff #828282"></div>
<div style="left:1847px;top:1045px;width:11px;height:11px;background:#fff;box-sizing:border-box;border:1px solid;border-color:#696969 #e3e3e3 #e3e3e3 #696969"></div>
<span style="left:1864px;top:1044px;font:11px 'Liberation Sans',sans-serif;color:#000;letter-spacing:-0.1px;height:15px;line-height:15px;">Reference</span>
<div style="left:0px;top:1061px;width:1920px;height:19px;background:linear-gradient(90deg,#e3ebf6 0,#e6edf7 300px,#eaf0f9 900px)"></div>
<span style="left:1.5px;top:1063.5px;font:12px 'Liberation Sans',sans-serif;color:#000;letter-spacing:-0.6px;height:16px;line-height:16px;">Ready</span>
<div style="left:1742px;top:1062px;width:75px;height:18px;box-sizing:border-box;border:1px solid;border-color:#9db3d3 #fff #fff #9db3d3"></div>
<div style="left:1820px;top:1062px;width:28px;height:18px;box-sizing:border-box;border:1px solid;border-color:#9db3d3 #fff #fff #9db3d3"></div>
<div style="left:1851px;top:1062px;width:33px;height:18px;box-sizing:border-box;border:1px solid;border-color:#9db3d3 #fff #fff #9db3d3"></div>
<div style="left:1887px;top:1062px;width:33px;height:18px;box-sizing:border-box;border:1px solid;border-color:#9db3d3 #fff #fff #9db3d3"></div>
<span style="left:1853px;top:1065px;font:12px 'Liberation Sans',sans-serif;color:#000;letter-spacing:-0.2px;height:15px;line-height:15px;">NUM</span>
</div></body></html>
